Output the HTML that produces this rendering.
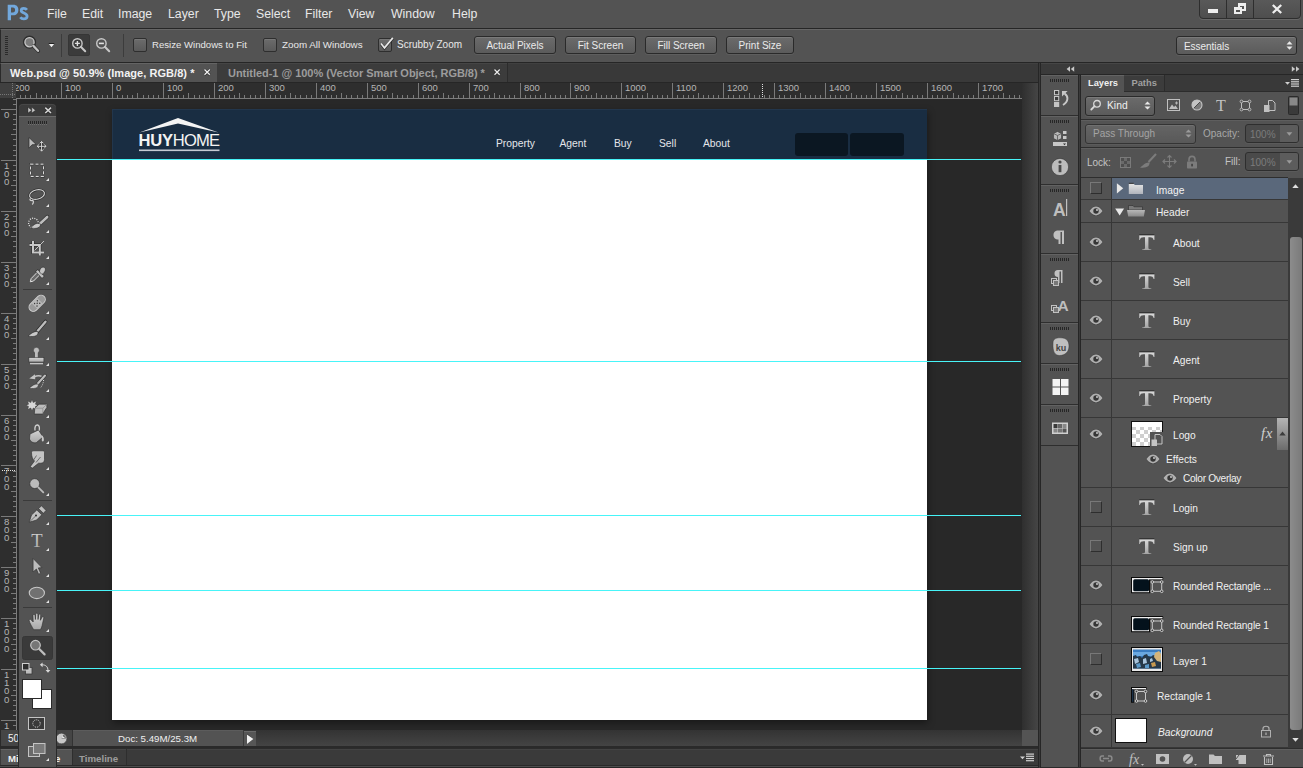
<!DOCTYPE html>
<html><head><meta charset="utf-8">
<style>
*{box-sizing:border-box;margin:0;padding:0}
html,body{width:1303px;height:768px;overflow:hidden;background:#535353;font-family:"Liberation Sans",sans-serif;color:#e6e6e6}
.a{position:absolute}
.t{position:absolute;white-space:nowrap;line-height:1}
svg{position:absolute;overflow:visible}
.navt{top:139px;font-size:10.3px;color:#e4e6ea}
.dd{border:1px solid #2a2a2a;border-radius:3px;background:linear-gradient(#6b6b6b,#5b5b5b);box-shadow:inset 0 1px 0 #7a7a7a,0 1px 0 #5e5e5e}
.fld{width:54px;height:19px;border:1px solid #2e2e2e;border-radius:3px;background:#4a4a4a;box-shadow:0 1px 0 #5a5a5a}
.fb{position:absolute;left:34px;top:0;width:18px;height:17px;background:#5c5c5c;border-radius:0 2px 2px 0}
.cb{width:14px;height:14px;border:1px solid #2e2e2e;border-radius:2px;background:linear-gradient(#6c6c6c,#5a5a5a);box-shadow:inset 0 1px 0 #777}
.btn{top:36px;height:18px;border:1px solid #2a2a2a;border-radius:3px;background:linear-gradient(#6b6b6b,#5b5b5b);box-shadow:inset 0 1px 0 #7a7a7a,0 1px 0 #5e5e5e;text-align:center}
.btn span{position:absolute;left:0;right:0;top:4px;font-size:10px;line-height:1;color:#ebebeb;white-space:nowrap}
</style></head><body>
<!-- MENU BAR -->
<div class="a" style="left:0;top:0;width:1303px;height:28px;background:#535353"></div>
<svg style="left:0;top:0" width="32" height="26" viewBox="0 0 32 26"><path fill-rule="evenodd" d="M7.7 20.2 V4.7 H13.4 C16.8 4.7 18.4 6.8 18.4 9.9 C18.4 13 16.5 15.2 13.2 15.2 H11 V20.2Z M11 7.5 V12.4 H12.9 C14.4 12.4 15.1 11.4 15.1 9.95 C15.1 8.5 14.4 7.5 12.9 7.5Z" fill="#72a8dc"/><path d="M26.9 9.9 C26.1 8.8 25 8.4 23.8 8.4 C22 8.4 21.2 9.3 21.2 10.4 C21.2 13.5 27.1 12.6 27.1 16.2 C27.1 18 25.6 18.9 23.7 18.9 C22.1 18.9 21 18.3 20.3 17.3" fill="none" stroke="#72a8dc" stroke-width="2.8"/></svg>
<div class="t" style="left:47px;top:8px;font-size:12.3px;color:#e8e8e8">File</div>
<div class="t" style="left:82px;top:8px;font-size:12.3px;color:#e8e8e8">Edit</div>
<div class="t" style="left:118px;top:8px;font-size:12.3px;color:#e8e8e8">Image</div>
<div class="t" style="left:168px;top:8px;font-size:12.3px;color:#e8e8e8">Layer</div>
<div class="t" style="left:214px;top:8px;font-size:12.3px;color:#e8e8e8">Type</div>
<div class="t" style="left:256px;top:8px;font-size:12.3px;color:#e8e8e8">Select</div>
<div class="t" style="left:305px;top:8px;font-size:12.3px;color:#e8e8e8">Filter</div>
<div class="t" style="left:348px;top:8px;font-size:12.3px;color:#e8e8e8">View</div>
<div class="t" style="left:391px;top:8px;font-size:12.3px;color:#e8e8e8">Window</div>
<div class="t" style="left:452px;top:8px;font-size:12.3px;color:#e8e8e8">Help</div>
<!-- window controls -->
<div class="a" style="left:1198.5px;top:-3px;width:102.5px;height:22px;border:1px solid #2e2e2e;border-radius:0 0 4px 4px;background:linear-gradient(#5a5a5a,#4e4e4e);box-shadow:0 1px 0 #676767"></div>
<div class="a" style="left:1226px;top:0;width:1px;height:18px;background:#2e2e2e"></div>
<div class="a" style="left:1253px;top:0;width:1px;height:18px;background:#2e2e2e"></div>
<div class="a" style="left:1208px;top:9px;width:10px;height:4px;background:#eee"></div>
<div class="a" style="left:1238px;top:3px;width:8px;height:8px;border:2px solid #eee;border-top-width:3px"></div>
<div class="a" style="left:1234px;top:7px;width:8px;height:7px;border:2px solid #eee;border-top-width:3px;background:#535353"></div>
<svg style="left:1271px;top:4px" width="12" height="10" viewBox="0 0 12 10"><path d="M1.8 1 L10.2 9 M10.2 1 L1.8 9" stroke="#eee" stroke-width="2.3"/></svg>
<div class="a" style="left:0;top:28px;width:1303px;height:1px;background:#262626"></div>

<!-- OPTIONS BAR -->
<div class="a" style="left:0;top:29px;width:1303px;height:33px;background:#535353;border-top:1px solid #666;border-left:1px solid #2a2a2a"></div>
<div class="a" style="left:0;top:62px;width:1303px;height:1px;background:#262626"></div>
<div class="a" style="left:5px;top:36px;width:3px;height:20px;background:repeating-linear-gradient(#2a2a2a 0 1px,transparent 1px 2px)"></div>
<svg style="left:22px;top:35px" width="20" height="20" viewBox="0 0 20 20">
 <circle cx="7.5" cy="7.2" r="5" fill="#7b7b7b" stroke="#2e2e2e" stroke-width="3.2"/>
 <circle cx="7.5" cy="7.2" r="4.6" fill="#7b7b7b" stroke="#c9c9c9" stroke-width="1.3"/>
 <path d="M11.5 11 L16.3 16" stroke="#2e2e2e" stroke-width="3.6" stroke-linecap="round"/>
 <path d="M11.3 10.8 L16 15.8" stroke="#c4c4c4" stroke-width="2.4" stroke-linecap="round"/>
</svg>
<svg style="left:48px;top:43px" width="7" height="5" viewBox="0 0 7 5"><path d="M0.5 0.5 H6.5 L3.5 4.2Z" fill="#f0f0f0"/><path d="M0.5 0.5H6.5" stroke="#222" stroke-width="1"/></svg>
<div class="a" style="left:61px;top:34px;width:1px;height:23px;background:#3c3c3c"></div>
<div class="a" style="left:68px;top:34px;width:22px;height:22px;background:#3b3b3b;border:1px solid #363636;border-radius:2px"></div>
<svg style="left:70px;top:36px" width="18" height="18" viewBox="0 0 18 18">
 <circle cx="7.4" cy="7.4" r="4.7" fill="none" stroke="#c8c8c8" stroke-width="1.4"/>
 <path d="M7.4 4.9V9.9M4.9 7.4H9.9" stroke="#e0e0e0" stroke-width="1.4"/>
 <path d="M10.8 10.8L15.2 15.3" stroke="#c8c8c8" stroke-width="2" stroke-linecap="round"/>
</svg>
<svg style="left:94px;top:36px" width="18" height="18" viewBox="0 0 18 18">
 <circle cx="7.4" cy="7.4" r="4.7" fill="none" stroke="#c8c8c8" stroke-width="1.4"/>
 <path d="M4.9 7.4H9.9" stroke="#e0e0e0" stroke-width="1.6"/>
 <path d="M10.8 10.8L15.2 15.3" stroke="#c8c8c8" stroke-width="2" stroke-linecap="round"/>
</svg>
<div class="a" style="left:123px;top:34px;width:1px;height:23px;background:#3c3c3c"></div>
<div class="a cb" style="left:133px;top:38px"></div>
<div class="t" style="left:152px;top:40px;font-size:9.6px;color:#e8e8e8">Resize Windows to Fit</div>
<div class="a cb" style="left:263px;top:38px"></div>
<div class="t" style="left:282px;top:40px;font-size:9.8px;color:#e8e8e8">Zoom All Windows</div>
<div class="a cb" style="left:378px;top:38px"></div>
<svg style="left:379px;top:35px" width="15" height="15" viewBox="0 0 15 15"><path d="M2 8.9 L5.5 13.4 L13.8 3.4" fill="none" stroke="#262626" stroke-width="2.6" opacity="0.8"/><path d="M2 8.4 L5.5 12.9 L13.8 2.9" fill="none" stroke="#e8e8e8" stroke-width="1.7"/></svg>
<div class="t" style="left:397px;top:40px;font-size:10px;color:#e8e8e8">Scrubby Zoom</div>
<div class="a btn" style="left:474px;width:82px"><span>Actual Pixels</span></div>
<div class="a btn" style="left:565px;width:71px"><span>Fit Screen</span></div>
<div class="a btn" style="left:645px;width:72px"><span>Fill Screen</span></div>
<div class="a btn" style="left:726px;width:68px"><span>Print Size</span></div>
<div class="a btn" style="left:1176px;width:121px;height:19px"><span style="left:7px;right:auto;top:5px;letter-spacing:-0.05px">Essentials</span></div>
<svg style="left:1286px;top:41px" width="7" height="9" viewBox="0 0 7 9"><path d="M0.5 3.5H6.5L3.5 0.3Z M0.5 5.5H6.5L3.5 8.7Z" fill="#eaeaea"/></svg>

<!-- TAB BAR -->
<div class="a" style="left:0;top:63px;width:1038px;height:19px;background:#393939;box-shadow:inset 0 1px 0 #404040"></div>
<div class="a" style="left:0;top:63px;width:217px;height:19px;background:#535353;border-top:1px solid #646464;border-left:1px solid #2a2a2a"></div>
<div class="t" style="left:10px;top:68px;font-size:11px;font-weight:700;color:#f2f2f2;letter-spacing:0.05px">Web.psd @ 50.9% (Image, RGB/8) *</div>
<svg style="left:204px;top:69px" width="7" height="7" viewBox="0 0 7 7"><path d="M0.5 0.5L5.8 5.8M5.8 0.5L0.5 5.8" stroke="#1e1e1e" stroke-width="2.4"/><path d="M0.5 0.5L5.8 5.8M5.8 0.5L0.5 5.8" stroke="#f0f0f0" stroke-width="1.4"/></svg>
<div class="a" style="left:217px;top:63px;width:290px;height:19px;background:#3c3c3c;border-top:1px solid #454545"></div>
<div class="a" style="left:507px;top:63px;width:1px;height:19px;background:#2c2c2c"></div>
<div class="t" style="left:228px;top:68px;font-size:11px;font-weight:700;color:#9c9c9c;letter-spacing:-0.03px">Untitled-1 @ 100% (Vector Smart Object, RGB/8) *</div>
<svg style="left:494px;top:69px" width="7" height="7" viewBox="0 0 7 7"><path d="M0.5 0.5L5.7 5.7M5.7 0.5L0.5 5.7" stroke="#1e1e1e" stroke-width="2.4"/><path d="M0.5 0.5L5.7 5.7M5.7 0.5L0.5 5.7" stroke="#e8e8e8" stroke-width="1.4"/></svg>


<!-- CANVAS -->
<div class="a" style="left:16px;top:98px;width:1006px;height:632px;background:#282828"></div>
<div class="a" style="left:112px;top:109px;width:815px;height:611px;background:#fff;box-shadow:1px 3px 7px rgba(0,0,0,0.4)"></div>
<div class="a" style="left:112px;top:109px;width:815px;height:50px;background:#192d42;box-shadow:inset 1px 1px 0 #22364c"></div>
<svg style="left:130px;top:112px" width="100" height="44" viewBox="130 112 100 44">
 <path d="M139.5 132.6 L178 118 L218.5 132.6 L178 123.6 Z" fill="#f4f4f4"/>
 <rect x="139" y="149.5" width="80.5" height="1.6" fill="#c6cbd3"/>
</svg>
<div class="t" style="left:138.5px;top:133px;font-size:16.6px;color:#f4f4f4"><b style="letter-spacing:-0.25px">HUY</b><span style="letter-spacing:-0.8px">HOME</span></div>
<div class="t navt" style="left:496px">Property</div>
<div class="t navt" style="left:559.5px">Agent</div>
<div class="t navt" style="left:614px">Buy</div>
<div class="t navt" style="left:659px">Sell</div>
<div class="t navt" style="left:703px">About</div>
<div class="a" style="left:795px;top:133px;width:53px;height:23px;background:#0b1722;border-radius:3px"></div>
<div class="a" style="left:850px;top:133px;width:54px;height:23px;background:#0b1722;border-radius:3px"></div>
<!-- guides -->
<div class="a" style="left:57px;top:159px;width:964px;height:1px;background:#48f4f8"></div>
<div class="a" style="left:57px;top:361px;width:964px;height:1px;background:#48f4f8"></div>
<div class="a" style="left:57px;top:515px;width:964px;height:1px;background:#48f4f8"></div>
<div class="a" style="left:57px;top:590px;width:964px;height:1px;background:#48f4f8"></div>
<div class="a" style="left:57px;top:668px;width:964px;height:1px;background:#48f4f8"></div>

<!-- RULERS -->
<svg style="left:0;top:82px" width="1022" height="17" viewBox="0 0 1022 17" shape-rendering="crispEdges">
<rect x="0" y="0" width="1022" height="1" fill="#262626"/>
<rect x="16" y="1" width="1006" height="15" fill="#2e2e2e"/>
<rect x="16" y="16" width="1006" height="1" fill="#7c7c7c"/>
<rect x="20" y="13" width="1" height="3" fill="#7a7a7a"/>
<rect x="25" y="13" width="1" height="3" fill="#7a7a7a"/>
<rect x="30" y="13" width="1" height="3" fill="#7a7a7a"/>
<rect x="36" y="11" width="1" height="5" fill="#7a7a7a"/>
<rect x="41" y="13" width="1" height="3" fill="#7a7a7a"/>
<rect x="46" y="13" width="1" height="3" fill="#7a7a7a"/>
<rect x="51" y="13" width="1" height="3" fill="#7a7a7a"/>
<rect x="56" y="13" width="1" height="3" fill="#7a7a7a"/>
<rect x="61" y="1" width="1" height="15" fill="#7a7a7a"/>
<rect x="66" y="13" width="1" height="3" fill="#7a7a7a"/>
<rect x="71" y="13" width="1" height="3" fill="#7a7a7a"/>
<rect x="76" y="13" width="1" height="3" fill="#7a7a7a"/>
<rect x="81" y="13" width="1" height="3" fill="#7a7a7a"/>
<rect x="87" y="11" width="1" height="5" fill="#7a7a7a"/>
<rect x="92" y="13" width="1" height="3" fill="#7a7a7a"/>
<rect x="97" y="13" width="1" height="3" fill="#7a7a7a"/>
<rect x="102" y="13" width="1" height="3" fill="#7a7a7a"/>
<rect x="107" y="13" width="1" height="3" fill="#7a7a7a"/>
<rect x="112" y="1" width="1" height="15" fill="#7a7a7a"/>
<rect x="117" y="13" width="1" height="3" fill="#7a7a7a"/>
<rect x="122" y="13" width="1" height="3" fill="#7a7a7a"/>
<rect x="127" y="13" width="1" height="3" fill="#7a7a7a"/>
<rect x="132" y="13" width="1" height="3" fill="#7a7a7a"/>
<rect x="137" y="11" width="1" height="5" fill="#7a7a7a"/>
<rect x="143" y="13" width="1" height="3" fill="#7a7a7a"/>
<rect x="148" y="13" width="1" height="3" fill="#7a7a7a"/>
<rect x="153" y="13" width="1" height="3" fill="#7a7a7a"/>
<rect x="158" y="13" width="1" height="3" fill="#7a7a7a"/>
<rect x="163" y="1" width="1" height="15" fill="#7a7a7a"/>
<rect x="168" y="13" width="1" height="3" fill="#7a7a7a"/>
<rect x="173" y="13" width="1" height="3" fill="#7a7a7a"/>
<rect x="178" y="13" width="1" height="3" fill="#7a7a7a"/>
<rect x="183" y="13" width="1" height="3" fill="#7a7a7a"/>
<rect x="188" y="11" width="1" height="5" fill="#7a7a7a"/>
<rect x="194" y="13" width="1" height="3" fill="#7a7a7a"/>
<rect x="199" y="13" width="1" height="3" fill="#7a7a7a"/>
<rect x="204" y="13" width="1" height="3" fill="#7a7a7a"/>
<rect x="209" y="13" width="1" height="3" fill="#7a7a7a"/>
<rect x="214" y="1" width="1" height="15" fill="#7a7a7a"/>
<rect x="219" y="13" width="1" height="3" fill="#7a7a7a"/>
<rect x="224" y="13" width="1" height="3" fill="#7a7a7a"/>
<rect x="229" y="13" width="1" height="3" fill="#7a7a7a"/>
<rect x="234" y="13" width="1" height="3" fill="#7a7a7a"/>
<rect x="239" y="11" width="1" height="5" fill="#7a7a7a"/>
<rect x="244" y="13" width="1" height="3" fill="#7a7a7a"/>
<rect x="250" y="13" width="1" height="3" fill="#7a7a7a"/>
<rect x="255" y="13" width="1" height="3" fill="#7a7a7a"/>
<rect x="260" y="13" width="1" height="3" fill="#7a7a7a"/>
<rect x="265" y="1" width="1" height="15" fill="#7a7a7a"/>
<rect x="270" y="13" width="1" height="3" fill="#7a7a7a"/>
<rect x="275" y="13" width="1" height="3" fill="#7a7a7a"/>
<rect x="280" y="13" width="1" height="3" fill="#7a7a7a"/>
<rect x="285" y="13" width="1" height="3" fill="#7a7a7a"/>
<rect x="290" y="11" width="1" height="5" fill="#7a7a7a"/>
<rect x="295" y="13" width="1" height="3" fill="#7a7a7a"/>
<rect x="300" y="13" width="1" height="3" fill="#7a7a7a"/>
<rect x="306" y="13" width="1" height="3" fill="#7a7a7a"/>
<rect x="311" y="13" width="1" height="3" fill="#7a7a7a"/>
<rect x="316" y="1" width="1" height="15" fill="#7a7a7a"/>
<rect x="321" y="13" width="1" height="3" fill="#7a7a7a"/>
<rect x="326" y="13" width="1" height="3" fill="#7a7a7a"/>
<rect x="331" y="13" width="1" height="3" fill="#7a7a7a"/>
<rect x="336" y="13" width="1" height="3" fill="#7a7a7a"/>
<rect x="341" y="11" width="1" height="5" fill="#7a7a7a"/>
<rect x="346" y="13" width="1" height="3" fill="#7a7a7a"/>
<rect x="351" y="13" width="1" height="3" fill="#7a7a7a"/>
<rect x="357" y="13" width="1" height="3" fill="#7a7a7a"/>
<rect x="362" y="13" width="1" height="3" fill="#7a7a7a"/>
<rect x="367" y="1" width="1" height="15" fill="#7a7a7a"/>
<rect x="372" y="13" width="1" height="3" fill="#7a7a7a"/>
<rect x="377" y="13" width="1" height="3" fill="#7a7a7a"/>
<rect x="382" y="13" width="1" height="3" fill="#7a7a7a"/>
<rect x="387" y="13" width="1" height="3" fill="#7a7a7a"/>
<rect x="392" y="11" width="1" height="5" fill="#7a7a7a"/>
<rect x="397" y="13" width="1" height="3" fill="#7a7a7a"/>
<rect x="402" y="13" width="1" height="3" fill="#7a7a7a"/>
<rect x="407" y="13" width="1" height="3" fill="#7a7a7a"/>
<rect x="413" y="13" width="1" height="3" fill="#7a7a7a"/>
<rect x="418" y="1" width="1" height="15" fill="#7a7a7a"/>
<rect x="423" y="13" width="1" height="3" fill="#7a7a7a"/>
<rect x="428" y="13" width="1" height="3" fill="#7a7a7a"/>
<rect x="433" y="13" width="1" height="3" fill="#7a7a7a"/>
<rect x="438" y="13" width="1" height="3" fill="#7a7a7a"/>
<rect x="443" y="11" width="1" height="5" fill="#7a7a7a"/>
<rect x="448" y="13" width="1" height="3" fill="#7a7a7a"/>
<rect x="453" y="13" width="1" height="3" fill="#7a7a7a"/>
<rect x="458" y="13" width="1" height="3" fill="#7a7a7a"/>
<rect x="463" y="13" width="1" height="3" fill="#7a7a7a"/>
<rect x="469" y="1" width="1" height="15" fill="#7a7a7a"/>
<rect x="474" y="13" width="1" height="3" fill="#7a7a7a"/>
<rect x="479" y="13" width="1" height="3" fill="#7a7a7a"/>
<rect x="484" y="13" width="1" height="3" fill="#7a7a7a"/>
<rect x="489" y="13" width="1" height="3" fill="#7a7a7a"/>
<rect x="494" y="11" width="1" height="5" fill="#7a7a7a"/>
<rect x="499" y="13" width="1" height="3" fill="#7a7a7a"/>
<rect x="504" y="13" width="1" height="3" fill="#7a7a7a"/>
<rect x="509" y="13" width="1" height="3" fill="#7a7a7a"/>
<rect x="514" y="13" width="1" height="3" fill="#7a7a7a"/>
<rect x="520" y="1" width="1" height="15" fill="#7a7a7a"/>
<rect x="525" y="13" width="1" height="3" fill="#7a7a7a"/>
<rect x="530" y="13" width="1" height="3" fill="#7a7a7a"/>
<rect x="535" y="13" width="1" height="3" fill="#7a7a7a"/>
<rect x="540" y="13" width="1" height="3" fill="#7a7a7a"/>
<rect x="545" y="11" width="1" height="5" fill="#7a7a7a"/>
<rect x="550" y="13" width="1" height="3" fill="#7a7a7a"/>
<rect x="555" y="13" width="1" height="3" fill="#7a7a7a"/>
<rect x="560" y="13" width="1" height="3" fill="#7a7a7a"/>
<rect x="565" y="13" width="1" height="3" fill="#7a7a7a"/>
<rect x="570" y="1" width="1" height="15" fill="#7a7a7a"/>
<rect x="576" y="13" width="1" height="3" fill="#7a7a7a"/>
<rect x="581" y="13" width="1" height="3" fill="#7a7a7a"/>
<rect x="586" y="13" width="1" height="3" fill="#7a7a7a"/>
<rect x="591" y="13" width="1" height="3" fill="#7a7a7a"/>
<rect x="596" y="11" width="1" height="5" fill="#7a7a7a"/>
<rect x="601" y="13" width="1" height="3" fill="#7a7a7a"/>
<rect x="606" y="13" width="1" height="3" fill="#7a7a7a"/>
<rect x="611" y="13" width="1" height="3" fill="#7a7a7a"/>
<rect x="616" y="13" width="1" height="3" fill="#7a7a7a"/>
<rect x="621" y="1" width="1" height="15" fill="#7a7a7a"/>
<rect x="626" y="13" width="1" height="3" fill="#7a7a7a"/>
<rect x="632" y="13" width="1" height="3" fill="#7a7a7a"/>
<rect x="637" y="13" width="1" height="3" fill="#7a7a7a"/>
<rect x="642" y="13" width="1" height="3" fill="#7a7a7a"/>
<rect x="647" y="11" width="1" height="5" fill="#7a7a7a"/>
<rect x="652" y="13" width="1" height="3" fill="#7a7a7a"/>
<rect x="657" y="13" width="1" height="3" fill="#7a7a7a"/>
<rect x="662" y="13" width="1" height="3" fill="#7a7a7a"/>
<rect x="667" y="13" width="1" height="3" fill="#7a7a7a"/>
<rect x="672" y="1" width="1" height="15" fill="#7a7a7a"/>
<rect x="677" y="13" width="1" height="3" fill="#7a7a7a"/>
<rect x="683" y="13" width="1" height="3" fill="#7a7a7a"/>
<rect x="688" y="13" width="1" height="3" fill="#7a7a7a"/>
<rect x="693" y="13" width="1" height="3" fill="#7a7a7a"/>
<rect x="698" y="11" width="1" height="5" fill="#7a7a7a"/>
<rect x="703" y="13" width="1" height="3" fill="#7a7a7a"/>
<rect x="708" y="13" width="1" height="3" fill="#7a7a7a"/>
<rect x="713" y="13" width="1" height="3" fill="#7a7a7a"/>
<rect x="718" y="13" width="1" height="3" fill="#7a7a7a"/>
<rect x="723" y="1" width="1" height="15" fill="#7a7a7a"/>
<rect x="728" y="13" width="1" height="3" fill="#7a7a7a"/>
<rect x="733" y="13" width="1" height="3" fill="#7a7a7a"/>
<rect x="739" y="13" width="1" height="3" fill="#7a7a7a"/>
<rect x="744" y="13" width="1" height="3" fill="#7a7a7a"/>
<rect x="749" y="11" width="1" height="5" fill="#7a7a7a"/>
<rect x="754" y="13" width="1" height="3" fill="#7a7a7a"/>
<rect x="759" y="13" width="1" height="3" fill="#7a7a7a"/>
<rect x="764" y="13" width="1" height="3" fill="#7a7a7a"/>
<rect x="769" y="13" width="1" height="3" fill="#7a7a7a"/>
<rect x="774" y="1" width="1" height="15" fill="#7a7a7a"/>
<rect x="779" y="13" width="1" height="3" fill="#7a7a7a"/>
<rect x="784" y="13" width="1" height="3" fill="#7a7a7a"/>
<rect x="790" y="13" width="1" height="3" fill="#7a7a7a"/>
<rect x="795" y="13" width="1" height="3" fill="#7a7a7a"/>
<rect x="800" y="11" width="1" height="5" fill="#7a7a7a"/>
<rect x="805" y="13" width="1" height="3" fill="#7a7a7a"/>
<rect x="810" y="13" width="1" height="3" fill="#7a7a7a"/>
<rect x="815" y="13" width="1" height="3" fill="#7a7a7a"/>
<rect x="820" y="13" width="1" height="3" fill="#7a7a7a"/>
<rect x="825" y="1" width="1" height="15" fill="#7a7a7a"/>
<rect x="830" y="13" width="1" height="3" fill="#7a7a7a"/>
<rect x="835" y="13" width="1" height="3" fill="#7a7a7a"/>
<rect x="840" y="13" width="1" height="3" fill="#7a7a7a"/>
<rect x="846" y="13" width="1" height="3" fill="#7a7a7a"/>
<rect x="851" y="11" width="1" height="5" fill="#7a7a7a"/>
<rect x="856" y="13" width="1" height="3" fill="#7a7a7a"/>
<rect x="861" y="13" width="1" height="3" fill="#7a7a7a"/>
<rect x="866" y="13" width="1" height="3" fill="#7a7a7a"/>
<rect x="871" y="13" width="1" height="3" fill="#7a7a7a"/>
<rect x="876" y="1" width="1" height="15" fill="#7a7a7a"/>
<rect x="881" y="13" width="1" height="3" fill="#7a7a7a"/>
<rect x="886" y="13" width="1" height="3" fill="#7a7a7a"/>
<rect x="891" y="13" width="1" height="3" fill="#7a7a7a"/>
<rect x="896" y="13" width="1" height="3" fill="#7a7a7a"/>
<rect x="902" y="11" width="1" height="5" fill="#7a7a7a"/>
<rect x="907" y="13" width="1" height="3" fill="#7a7a7a"/>
<rect x="912" y="13" width="1" height="3" fill="#7a7a7a"/>
<rect x="917" y="13" width="1" height="3" fill="#7a7a7a"/>
<rect x="922" y="13" width="1" height="3" fill="#7a7a7a"/>
<rect x="927" y="1" width="1" height="15" fill="#7a7a7a"/>
<rect x="932" y="13" width="1" height="3" fill="#7a7a7a"/>
<rect x="937" y="13" width="1" height="3" fill="#7a7a7a"/>
<rect x="942" y="13" width="1" height="3" fill="#7a7a7a"/>
<rect x="947" y="13" width="1" height="3" fill="#7a7a7a"/>
<rect x="953" y="11" width="1" height="5" fill="#7a7a7a"/>
<rect x="958" y="13" width="1" height="3" fill="#7a7a7a"/>
<rect x="963" y="13" width="1" height="3" fill="#7a7a7a"/>
<rect x="968" y="13" width="1" height="3" fill="#7a7a7a"/>
<rect x="973" y="13" width="1" height="3" fill="#7a7a7a"/>
<rect x="978" y="1" width="1" height="15" fill="#7a7a7a"/>
<rect x="983" y="13" width="1" height="3" fill="#7a7a7a"/>
<rect x="988" y="13" width="1" height="3" fill="#7a7a7a"/>
<rect x="993" y="13" width="1" height="3" fill="#7a7a7a"/>
<rect x="998" y="13" width="1" height="3" fill="#7a7a7a"/>
<rect x="1003" y="11" width="1" height="5" fill="#7a7a7a"/>
<rect x="1009" y="13" width="1" height="3" fill="#7a7a7a"/>
<rect x="1014" y="13" width="1" height="3" fill="#7a7a7a"/>
<rect x="1019" y="13" width="1" height="3" fill="#7a7a7a"/>
<text x="14" y="9" font-size="9.5" fill="#b4b4b4" font-family="Liberation Sans" shape-rendering="auto">200</text>
<text x="65" y="9" font-size="9.5" fill="#b4b4b4" font-family="Liberation Sans" shape-rendering="auto">100</text>
<text x="116" y="9" font-size="9.5" fill="#b4b4b4" font-family="Liberation Sans" shape-rendering="auto">0</text>
<text x="167" y="9" font-size="9.5" fill="#b4b4b4" font-family="Liberation Sans" shape-rendering="auto">100</text>
<text x="218" y="9" font-size="9.5" fill="#b4b4b4" font-family="Liberation Sans" shape-rendering="auto">200</text>
<text x="269" y="9" font-size="9.5" fill="#b4b4b4" font-family="Liberation Sans" shape-rendering="auto">300</text>
<text x="320" y="9" font-size="9.5" fill="#b4b4b4" font-family="Liberation Sans" shape-rendering="auto">400</text>
<text x="371" y="9" font-size="9.5" fill="#b4b4b4" font-family="Liberation Sans" shape-rendering="auto">500</text>
<text x="422" y="9" font-size="9.5" fill="#b4b4b4" font-family="Liberation Sans" shape-rendering="auto">600</text>
<text x="473" y="9" font-size="9.5" fill="#b4b4b4" font-family="Liberation Sans" shape-rendering="auto">700</text>
<text x="524" y="9" font-size="9.5" fill="#b4b4b4" font-family="Liberation Sans" shape-rendering="auto">800</text>
<text x="574" y="9" font-size="9.5" fill="#b4b4b4" font-family="Liberation Sans" shape-rendering="auto">900</text>
<text x="625" y="9" font-size="9.5" fill="#b4b4b4" font-family="Liberation Sans" shape-rendering="auto">1000</text>
<text x="676" y="9" font-size="9.5" fill="#b4b4b4" font-family="Liberation Sans" shape-rendering="auto">1100</text>
<text x="727" y="9" font-size="9.5" fill="#b4b4b4" font-family="Liberation Sans" shape-rendering="auto">1200</text>
<text x="778" y="9" font-size="9.5" fill="#b4b4b4" font-family="Liberation Sans" shape-rendering="auto">1300</text>
<text x="829" y="9" font-size="9.5" fill="#b4b4b4" font-family="Liberation Sans" shape-rendering="auto">1400</text>
<text x="880" y="9" font-size="9.5" fill="#b4b4b4" font-family="Liberation Sans" shape-rendering="auto">1500</text>
<text x="931" y="9" font-size="9.5" fill="#b4b4b4" font-family="Liberation Sans" shape-rendering="auto">1600</text>
<text x="982" y="9" font-size="9.5" fill="#b4b4b4" font-family="Liberation Sans" shape-rendering="auto">1700</text>
<rect x="762" y="2" width="1" height="1" fill="#e0e0e0"/><rect x="762" y="4" width="1" height="1" fill="#e0e0e0"/><rect x="762" y="6" width="1" height="1" fill="#e0e0e0"/><rect x="762" y="8" width="1" height="1" fill="#e0e0e0"/><rect x="762" y="10" width="1" height="1" fill="#e0e0e0"/><rect x="762" y="12" width="1" height="1" fill="#e0e0e0"/><rect x="762" y="14" width="1" height="1" fill="#e0e0e0"/>
</svg>
<div class="a" style="left:0;top:83px;width:16px;height:15px;background:#404040"></div>
<div class="a" style="left:12px;top:83px;width:1px;height:15px;background:repeating-linear-gradient(#777 0 1px,transparent 1px 2px)"></div>
<div class="a" style="left:0;top:94px;width:16px;height:1px;background:repeating-linear-gradient(90deg,#777 0 1px,transparent 1px 2px)"></div>
<svg style="left:0;top:98px" width="17" height="632" viewBox="0 0 17 632" shape-rendering="crispEdges">
<rect x="0" y="0" width="16" height="632" fill="#2e2e2e"/>
<rect x="16" y="0" width="1" height="632" fill="#7c7c7c"/>
<rect x="13" y="1" width="3" height="1" fill="#7a7a7a"/>
<rect x="13" y="6" width="3" height="1" fill="#7a7a7a"/>
<rect x="1" y="11" width="15" height="1" fill="#7a7a7a"/>
<text x="4" y="19.9" font-size="9.6" fill="#b4b4b4" font-family="Liberation Sans" shape-rendering="auto">0</text>
<rect x="13" y="16" width="3" height="1" fill="#7a7a7a"/>
<rect x="13" y="21" width="3" height="1" fill="#7a7a7a"/>
<rect x="13" y="26" width="3" height="1" fill="#7a7a7a"/>
<rect x="13" y="31" width="3" height="1" fill="#7a7a7a"/>
<rect x="11" y="36" width="5" height="1" fill="#7a7a7a"/>
<rect x="13" y="41" width="3" height="1" fill="#7a7a7a"/>
<rect x="13" y="47" width="3" height="1" fill="#7a7a7a"/>
<rect x="13" y="52" width="3" height="1" fill="#7a7a7a"/>
<rect x="13" y="57" width="3" height="1" fill="#7a7a7a"/>
<rect x="1" y="62" width="15" height="1" fill="#7a7a7a"/>
<text x="4" y="70.9" font-size="9.6" fill="#b4b4b4" font-family="Liberation Sans" shape-rendering="auto">1</text>
<text x="4" y="79.1" font-size="9.6" fill="#b4b4b4" font-family="Liberation Sans" shape-rendering="auto">0</text>
<text x="4" y="87.3" font-size="9.6" fill="#b4b4b4" font-family="Liberation Sans" shape-rendering="auto">0</text>
<rect x="13" y="67" width="3" height="1" fill="#7a7a7a"/>
<rect x="13" y="72" width="3" height="1" fill="#7a7a7a"/>
<rect x="13" y="77" width="3" height="1" fill="#7a7a7a"/>
<rect x="13" y="82" width="3" height="1" fill="#7a7a7a"/>
<rect x="11" y="87" width="5" height="1" fill="#7a7a7a"/>
<rect x="13" y="92" width="3" height="1" fill="#7a7a7a"/>
<rect x="13" y="97" width="3" height="1" fill="#7a7a7a"/>
<rect x="13" y="103" width="3" height="1" fill="#7a7a7a"/>
<rect x="13" y="108" width="3" height="1" fill="#7a7a7a"/>
<rect x="1" y="113" width="15" height="1" fill="#7a7a7a"/>
<text x="4" y="121.9" font-size="9.6" fill="#b4b4b4" font-family="Liberation Sans" shape-rendering="auto">2</text>
<text x="4" y="130.1" font-size="9.6" fill="#b4b4b4" font-family="Liberation Sans" shape-rendering="auto">0</text>
<text x="4" y="138.3" font-size="9.6" fill="#b4b4b4" font-family="Liberation Sans" shape-rendering="auto">0</text>
<rect x="13" y="118" width="3" height="1" fill="#7a7a7a"/>
<rect x="13" y="123" width="3" height="1" fill="#7a7a7a"/>
<rect x="13" y="128" width="3" height="1" fill="#7a7a7a"/>
<rect x="13" y="133" width="3" height="1" fill="#7a7a7a"/>
<rect x="11" y="138" width="5" height="1" fill="#7a7a7a"/>
<rect x="13" y="143" width="3" height="1" fill="#7a7a7a"/>
<rect x="13" y="148" width="3" height="1" fill="#7a7a7a"/>
<rect x="13" y="154" width="3" height="1" fill="#7a7a7a"/>
<rect x="13" y="159" width="3" height="1" fill="#7a7a7a"/>
<rect x="1" y="164" width="15" height="1" fill="#7a7a7a"/>
<text x="4" y="172.9" font-size="9.6" fill="#b4b4b4" font-family="Liberation Sans" shape-rendering="auto">3</text>
<text x="4" y="181.1" font-size="9.6" fill="#b4b4b4" font-family="Liberation Sans" shape-rendering="auto">0</text>
<text x="4" y="189.3" font-size="9.6" fill="#b4b4b4" font-family="Liberation Sans" shape-rendering="auto">0</text>
<rect x="13" y="169" width="3" height="1" fill="#7a7a7a"/>
<rect x="13" y="174" width="3" height="1" fill="#7a7a7a"/>
<rect x="13" y="179" width="3" height="1" fill="#7a7a7a"/>
<rect x="13" y="184" width="3" height="1" fill="#7a7a7a"/>
<rect x="11" y="189" width="5" height="1" fill="#7a7a7a"/>
<rect x="13" y="194" width="3" height="1" fill="#7a7a7a"/>
<rect x="13" y="199" width="3" height="1" fill="#7a7a7a"/>
<rect x="13" y="204" width="3" height="1" fill="#7a7a7a"/>
<rect x="13" y="210" width="3" height="1" fill="#7a7a7a"/>
<rect x="1" y="215" width="15" height="1" fill="#7a7a7a"/>
<text x="4" y="223.9" font-size="9.6" fill="#b4b4b4" font-family="Liberation Sans" shape-rendering="auto">4</text>
<text x="4" y="232.1" font-size="9.6" fill="#b4b4b4" font-family="Liberation Sans" shape-rendering="auto">0</text>
<text x="4" y="240.3" font-size="9.6" fill="#b4b4b4" font-family="Liberation Sans" shape-rendering="auto">0</text>
<rect x="13" y="220" width="3" height="1" fill="#7a7a7a"/>
<rect x="13" y="225" width="3" height="1" fill="#7a7a7a"/>
<rect x="13" y="230" width="3" height="1" fill="#7a7a7a"/>
<rect x="13" y="235" width="3" height="1" fill="#7a7a7a"/>
<rect x="11" y="240" width="5" height="1" fill="#7a7a7a"/>
<rect x="13" y="245" width="3" height="1" fill="#7a7a7a"/>
<rect x="13" y="250" width="3" height="1" fill="#7a7a7a"/>
<rect x="13" y="255" width="3" height="1" fill="#7a7a7a"/>
<rect x="13" y="261" width="3" height="1" fill="#7a7a7a"/>
<rect x="1" y="266" width="15" height="1" fill="#7a7a7a"/>
<text x="4" y="274.9" font-size="9.6" fill="#b4b4b4" font-family="Liberation Sans" shape-rendering="auto">5</text>
<text x="4" y="283.1" font-size="9.6" fill="#b4b4b4" font-family="Liberation Sans" shape-rendering="auto">0</text>
<text x="4" y="291.3" font-size="9.6" fill="#b4b4b4" font-family="Liberation Sans" shape-rendering="auto">0</text>
<rect x="13" y="271" width="3" height="1" fill="#7a7a7a"/>
<rect x="13" y="276" width="3" height="1" fill="#7a7a7a"/>
<rect x="13" y="281" width="3" height="1" fill="#7a7a7a"/>
<rect x="13" y="286" width="3" height="1" fill="#7a7a7a"/>
<rect x="11" y="291" width="5" height="1" fill="#7a7a7a"/>
<rect x="13" y="296" width="3" height="1" fill="#7a7a7a"/>
<rect x="13" y="301" width="3" height="1" fill="#7a7a7a"/>
<rect x="13" y="306" width="3" height="1" fill="#7a7a7a"/>
<rect x="13" y="311" width="3" height="1" fill="#7a7a7a"/>
<rect x="1" y="317" width="15" height="1" fill="#7a7a7a"/>
<text x="4" y="325.9" font-size="9.6" fill="#b4b4b4" font-family="Liberation Sans" shape-rendering="auto">6</text>
<text x="4" y="334.1" font-size="9.6" fill="#b4b4b4" font-family="Liberation Sans" shape-rendering="auto">0</text>
<text x="4" y="342.3" font-size="9.6" fill="#b4b4b4" font-family="Liberation Sans" shape-rendering="auto">0</text>
<rect x="13" y="322" width="3" height="1" fill="#7a7a7a"/>
<rect x="13" y="327" width="3" height="1" fill="#7a7a7a"/>
<rect x="13" y="332" width="3" height="1" fill="#7a7a7a"/>
<rect x="13" y="337" width="3" height="1" fill="#7a7a7a"/>
<rect x="11" y="342" width="5" height="1" fill="#7a7a7a"/>
<rect x="13" y="347" width="3" height="1" fill="#7a7a7a"/>
<rect x="13" y="352" width="3" height="1" fill="#7a7a7a"/>
<rect x="13" y="357" width="3" height="1" fill="#7a7a7a"/>
<rect x="13" y="362" width="3" height="1" fill="#7a7a7a"/>
<rect x="1" y="367" width="15" height="1" fill="#7a7a7a"/>
<text x="4" y="375.9" font-size="9.6" fill="#b4b4b4" font-family="Liberation Sans" shape-rendering="auto">7</text>
<text x="4" y="384.1" font-size="9.6" fill="#b4b4b4" font-family="Liberation Sans" shape-rendering="auto">0</text>
<text x="4" y="392.3" font-size="9.6" fill="#b4b4b4" font-family="Liberation Sans" shape-rendering="auto">0</text>
<rect x="13" y="373" width="3" height="1" fill="#7a7a7a"/>
<rect x="13" y="378" width="3" height="1" fill="#7a7a7a"/>
<rect x="13" y="383" width="3" height="1" fill="#7a7a7a"/>
<rect x="13" y="388" width="3" height="1" fill="#7a7a7a"/>
<rect x="11" y="393" width="5" height="1" fill="#7a7a7a"/>
<rect x="13" y="398" width="3" height="1" fill="#7a7a7a"/>
<rect x="13" y="403" width="3" height="1" fill="#7a7a7a"/>
<rect x="13" y="408" width="3" height="1" fill="#7a7a7a"/>
<rect x="13" y="413" width="3" height="1" fill="#7a7a7a"/>
<rect x="1" y="418" width="15" height="1" fill="#7a7a7a"/>
<text x="4" y="426.9" font-size="9.6" fill="#b4b4b4" font-family="Liberation Sans" shape-rendering="auto">8</text>
<text x="4" y="435.1" font-size="9.6" fill="#b4b4b4" font-family="Liberation Sans" shape-rendering="auto">0</text>
<text x="4" y="443.3" font-size="9.6" fill="#b4b4b4" font-family="Liberation Sans" shape-rendering="auto">0</text>
<rect x="13" y="424" width="3" height="1" fill="#7a7a7a"/>
<rect x="13" y="429" width="3" height="1" fill="#7a7a7a"/>
<rect x="13" y="434" width="3" height="1" fill="#7a7a7a"/>
<rect x="13" y="439" width="3" height="1" fill="#7a7a7a"/>
<rect x="11" y="444" width="5" height="1" fill="#7a7a7a"/>
<rect x="13" y="449" width="3" height="1" fill="#7a7a7a"/>
<rect x="13" y="454" width="3" height="1" fill="#7a7a7a"/>
<rect x="13" y="459" width="3" height="1" fill="#7a7a7a"/>
<rect x="13" y="464" width="3" height="1" fill="#7a7a7a"/>
<rect x="1" y="469" width="15" height="1" fill="#7a7a7a"/>
<text x="4" y="477.9" font-size="9.6" fill="#b4b4b4" font-family="Liberation Sans" shape-rendering="auto">9</text>
<text x="4" y="486.1" font-size="9.6" fill="#b4b4b4" font-family="Liberation Sans" shape-rendering="auto">0</text>
<text x="4" y="494.3" font-size="9.6" fill="#b4b4b4" font-family="Liberation Sans" shape-rendering="auto">0</text>
<rect x="13" y="474" width="3" height="1" fill="#7a7a7a"/>
<rect x="13" y="480" width="3" height="1" fill="#7a7a7a"/>
<rect x="13" y="485" width="3" height="1" fill="#7a7a7a"/>
<rect x="13" y="490" width="3" height="1" fill="#7a7a7a"/>
<rect x="11" y="495" width="5" height="1" fill="#7a7a7a"/>
<rect x="13" y="500" width="3" height="1" fill="#7a7a7a"/>
<rect x="13" y="505" width="3" height="1" fill="#7a7a7a"/>
<rect x="13" y="510" width="3" height="1" fill="#7a7a7a"/>
<rect x="13" y="515" width="3" height="1" fill="#7a7a7a"/>
<rect x="1" y="520" width="15" height="1" fill="#7a7a7a"/>
<text x="4" y="528.9" font-size="9.6" fill="#b4b4b4" font-family="Liberation Sans" shape-rendering="auto">1</text>
<text x="4" y="537.1" font-size="9.6" fill="#b4b4b4" font-family="Liberation Sans" shape-rendering="auto">0</text>
<text x="4" y="545.3" font-size="9.6" fill="#b4b4b4" font-family="Liberation Sans" shape-rendering="auto">0</text>
<text x="4" y="553.5" font-size="9.6" fill="#b4b4b4" font-family="Liberation Sans" shape-rendering="auto">0</text>
<rect x="13" y="525" width="3" height="1" fill="#7a7a7a"/>
<rect x="13" y="530" width="3" height="1" fill="#7a7a7a"/>
<rect x="13" y="536" width="3" height="1" fill="#7a7a7a"/>
<rect x="13" y="541" width="3" height="1" fill="#7a7a7a"/>
<rect x="11" y="546" width="5" height="1" fill="#7a7a7a"/>
<rect x="13" y="551" width="3" height="1" fill="#7a7a7a"/>
<rect x="13" y="556" width="3" height="1" fill="#7a7a7a"/>
<rect x="13" y="561" width="3" height="1" fill="#7a7a7a"/>
<rect x="13" y="566" width="3" height="1" fill="#7a7a7a"/>
<rect x="1" y="571" width="15" height="1" fill="#7a7a7a"/>
<text x="4" y="579.9" font-size="9.6" fill="#b4b4b4" font-family="Liberation Sans" shape-rendering="auto">1</text>
<text x="4" y="588.1" font-size="9.6" fill="#b4b4b4" font-family="Liberation Sans" shape-rendering="auto">1</text>
<text x="4" y="596.3" font-size="9.6" fill="#b4b4b4" font-family="Liberation Sans" shape-rendering="auto">0</text>
<text x="4" y="604.5" font-size="9.6" fill="#b4b4b4" font-family="Liberation Sans" shape-rendering="auto">0</text>
<rect x="13" y="576" width="3" height="1" fill="#7a7a7a"/>
<rect x="13" y="581" width="3" height="1" fill="#7a7a7a"/>
<rect x="13" y="587" width="3" height="1" fill="#7a7a7a"/>
<rect x="13" y="592" width="3" height="1" fill="#7a7a7a"/>
<rect x="11" y="597" width="5" height="1" fill="#7a7a7a"/>
<rect x="13" y="602" width="3" height="1" fill="#7a7a7a"/>
<rect x="13" y="607" width="3" height="1" fill="#7a7a7a"/>
<rect x="13" y="612" width="3" height="1" fill="#7a7a7a"/>
<rect x="13" y="617" width="3" height="1" fill="#7a7a7a"/>
<rect x="1" y="622" width="15" height="1" fill="#7a7a7a"/>
<text x="4" y="630.9" font-size="9.6" fill="#b4b4b4" font-family="Liberation Sans" shape-rendering="auto">1</text>
<text x="4" y="639.1" font-size="9.6" fill="#b4b4b4" font-family="Liberation Sans" shape-rendering="auto">2</text>
<text x="4" y="647.3" font-size="9.6" fill="#b4b4b4" font-family="Liberation Sans" shape-rendering="auto">0</text>
<text x="4" y="655.5" font-size="9.6" fill="#b4b4b4" font-family="Liberation Sans" shape-rendering="auto">0</text>
<rect x="13" y="627" width="3" height="1" fill="#7a7a7a"/>
<rect x="2" y="372" width="1" height="1" fill="#e0e0e0"/><rect x="4" y="372" width="1" height="1" fill="#e0e0e0"/><rect x="6" y="372" width="1" height="1" fill="#e0e0e0"/><rect x="8" y="372" width="1" height="1" fill="#e0e0e0"/><rect x="10" y="372" width="1" height="1" fill="#e0e0e0"/><rect x="12" y="372" width="1" height="1" fill="#e0e0e0"/><rect x="14" y="372" width="1" height="1" fill="#e0e0e0"/>
</svg>
<!-- V SCROLLBAR -->
<div class="a" style="left:1022px;top:83px;width:16px;height:647px;background:linear-gradient(90deg,#2f2f2f,#454545)"></div>
<div class="a" style="left:1022px;top:82px;width:16px;height:1px;background:#262626"></div>
<!-- STATUS / H SCROLL -->
<div class="a" style="left:0;top:730px;width:1022px;height:16px;background:linear-gradient(#333,#444)"></div>
<div class="a" style="left:1022px;top:730px;width:16px;height:16px;background:#545454"></div>
<div class="a" style="left:0;top:730px;width:73px;height:16px;background:#454545;border-left:1px solid #2a2a2a"></div>
<div class="t" style="left:8px;top:734px;font-size:10px;color:#f0f0f0">50.9%</div>
<svg style="left:55px;top:732px" width="13" height="13" viewBox="0 0 13 13"><circle cx="6.5" cy="6.5" r="5.3" fill="#c8c8c8" stroke="#3a3a3a" stroke-width="0.5"/><path d="M6.5 6.5 H11 A4.5 4.5 0 0 0 8.5 2.5Z" fill="#666"/><path d="M7.2 3.8 L10 6 L7.2 6Z" fill="#f0f0f0"/></svg>
<div class="a" style="left:72px;top:730px;width:1px;height:16px;background:#333"></div>
<div class="a" style="left:73px;top:730px;width:171px;height:16px;background:#535353;box-shadow:inset 0 1px 0 #5c5c5c"></div>
<div class="t" style="left:118px;top:733.5px;font-size:9.7px;color:#f0f0f0">Doc: 5.49M/25.3M</div>
<div class="a" style="left:243px;top:730px;width:1px;height:16px;background:#3a3a3a"></div>
<div class="a" style="left:244px;top:731px;width:12px;height:15px;background:#565656;box-shadow:inset 0 1px 0 #6a6a6a"></div>
<svg style="left:246px;top:733px" width="8" height="12" viewBox="0 0 8 12"><path d="M1 0.6 L7.4 6 L1 11.2Z" fill="#222" opacity="0.7"/><path d="M1 1.4 L7.4 6.1 L1 11Z" fill="#f2f2f2"/></svg>
<div class="a" style="left:0;top:746px;width:1038px;height:2px;background:#2a2a2a"></div>
<div class="a" style="left:0;top:748px;width:1038px;height:20px;background:linear-gradient(#2c2c2c 0 1px,#434343 1px 2px,#3a3a3a 2px 17px,#2a2a2a 17px 18px,#4e4e4e 18px 19px,#262626 19px 20px)"></div>
<div class="a" style="left:1px;top:749px;width:71px;height:16px;background:#535353;box-shadow:inset 0 1px 0 #636363"></div>
<div class="t" style="left:8px;top:754px;font-size:9.6px;font-weight:700;color:#f0f0f0">Mini Bridge</div>
<div class="a" style="left:72px;top:749px;width:55px;height:16px;background:#3c3c3c;border-left:1px solid #2e2e2e;border-right:1px solid #2e2e2e;box-shadow:inset 0 1px 0 #464646"></div>
<div class="t" style="left:79px;top:754px;font-size:9.7px;font-weight:700;color:#9c9c9c">Timeline</div>
<svg style="left:1019px;top:753px" width="16" height="9" viewBox="1019 753 16 9"><path d="M1020 756.5H1025L1022.5 759.3Z" fill="#d0d0d0"/><g fill="#d0d0d0"><rect x="1026" y="753.5" width="8" height="1.2"/><rect x="1026" y="755.7" width="8" height="1.2"/><rect x="1026" y="757.9" width="8" height="1.2"/><rect x="1026" y="760.1" width="8" height="1.2"/></g></svg>

<!-- DOCK -->
<div class="a" style="left:1038px;top:63px;width:3px;height:705px;background:linear-gradient(90deg,#262626 0 1px,#3a3a3a 1px 2px,#262626 2px 3px)"></div>
<div class="a" style="left:1041px;top:63px;width:262px;height:12px;background:#3a3a3a;box-shadow:inset 0 1px 0 #464646"></div>
<svg style="left:1066px;top:66px" width="9" height="6" viewBox="0 0 9 6"><path d="M4 0.2V5.8L0.6 3Z M8.2 0.2V5.8L4.8 3Z" fill="#c8c8c8"/></svg>
<svg style="left:1291px;top:66px" width="9" height="6" viewBox="0 0 9 6"><path d="M0.8 0.2V5.8L4.2 3Z M5 0.2V5.8L8.4 3Z" fill="#c8c8c8"/></svg>
<div class="a" style="left:1041px;top:74px;width:262px;height:1px;background:#262626"></div>
<div class="a" style="left:1041px;top:75px;width:37px;height:693px;background:#535353"></div>
<div class="a" style="left:1078px;top:75px;width:3px;height:693px;background:linear-gradient(90deg,#262626 0 1px,#3a3a3a 1px 2px,#262626 2px 3px)"></div>
<div class="a" style="left:1041px;top:115px;width:37px;height:1px;background:#2e2e2e"></div>
<div class="a" style="left:1041px;top:75px;width:37px;height:1px;background:#626262"></div>
<div class="a" style="left:1050px;top:79px;width:20px;height:3px;background:repeating-linear-gradient(90deg,#262626 0 1px,transparent 1px 2px)"></div>
<div class="a" style="left:1041px;top:184px;width:37px;height:1px;background:#2e2e2e"></div>
<div class="a" style="left:1041px;top:116px;width:37px;height:1px;background:#626262"></div>
<div class="a" style="left:1050px;top:120px;width:20px;height:3px;background:repeating-linear-gradient(90deg,#262626 0 1px,transparent 1px 2px)"></div>
<div class="a" style="left:1041px;top:253px;width:37px;height:1px;background:#2e2e2e"></div>
<div class="a" style="left:1041px;top:185px;width:37px;height:1px;background:#626262"></div>
<div class="a" style="left:1050px;top:189px;width:20px;height:3px;background:repeating-linear-gradient(90deg,#262626 0 1px,transparent 1px 2px)"></div>
<div class="a" style="left:1041px;top:322px;width:37px;height:1px;background:#2e2e2e"></div>
<div class="a" style="left:1041px;top:254px;width:37px;height:1px;background:#626262"></div>
<div class="a" style="left:1050px;top:258px;width:20px;height:3px;background:repeating-linear-gradient(90deg,#262626 0 1px,transparent 1px 2px)"></div>
<div class="a" style="left:1041px;top:363px;width:37px;height:1px;background:#2e2e2e"></div>
<div class="a" style="left:1041px;top:323px;width:37px;height:1px;background:#626262"></div>
<div class="a" style="left:1050px;top:327px;width:20px;height:3px;background:repeating-linear-gradient(90deg,#262626 0 1px,transparent 1px 2px)"></div>
<div class="a" style="left:1041px;top:404px;width:37px;height:1px;background:#2e2e2e"></div>
<div class="a" style="left:1041px;top:364px;width:37px;height:1px;background:#626262"></div>
<div class="a" style="left:1050px;top:368px;width:20px;height:3px;background:repeating-linear-gradient(90deg,#262626 0 1px,transparent 1px 2px)"></div>
<div class="a" style="left:1041px;top:445px;width:37px;height:1px;background:#2e2e2e"></div>
<div class="a" style="left:1041px;top:405px;width:37px;height:1px;background:#626262"></div>
<div class="a" style="left:1050px;top:409px;width:20px;height:3px;background:repeating-linear-gradient(90deg,#262626 0 1px,transparent 1px 2px)"></div>
<svg style="left:1041px;top:75px" width="37" height="380" viewBox="1041 75 37 380">
 <g fill="#3e3e3e" stroke="#c8c8c8" stroke-width="1"><rect x="1054.5" y="90.5" width="4.2" height="4.2"/><rect x="1054.5" y="96.5" width="4.2" height="4.2"/></g>
 <rect x="1054" y="102" width="5.2" height="5" fill="#c4c4c4"/>
 <path d="M1062 91 H1067.6 L1062 96.6Z" fill="#c8c8c8"/>
 <path d="M1064.6 93.6 C1068.6 96 1068.6 101.5 1063 105" fill="none" stroke="#c8c8c8" stroke-width="1.9"/>
 <path d="M1053.5 133.5 L1057.5 131.5 L1061.5 133.5 V138.5 L1057.5 140.5 L1053.5 138.5Z" fill="#b8b8b8" stroke="#3a3a3a" stroke-width="0.6"/>
 <path d="M1053.5 133.5 L1057.5 135.5 L1061.5 133.5 M1057.5 135.5 V140.5" fill="none" stroke="#555" stroke-width="0.8"/>
 <rect x="1063" y="131" width="3.5" height="3" fill="#c8c8c8"/><rect x="1063" y="136" width="3.5" height="3" fill="#c8c8c8"/>
 <rect x="1053" y="142" width="14" height="4" fill="#c8c8c8"/><path d="M1063 143.5h3l-1.5 1.8z" fill="#333"/>
 <circle cx="1060" cy="167" r="8.6" fill="#bcbcbc" stroke="#3a3a3a" stroke-width="0.6"/>
 <rect x="1058.6" y="165" width="2.8" height="7.2" fill="#4a4a4a"/><circle cx="1060" cy="162" r="1.6" fill="#4a4a4a"/>
 <text x="1053" y="215.5" font-family="Liberation Sans" font-weight="700" font-size="17.5" fill="#c0c0c0" opacity="0.99">A</text>
 <rect x="1066" y="199" width="1.2" height="17" fill="#c0c0c0"/>
 <path d="M1062 230.5 H1058.5 C1055 230.5 1053.5 232.5 1053.5 235 C1053.5 237.5 1055 239.5 1058.5 239.5 V244 H1060.5 V232 H1062 V244 H1064 V230.5Z" fill="#c0c0c0"/>
 <path d="M1060 270 H1058 C1055.5 270 1054.5 271.5 1054.5 273.5 C1054.5 275.5 1055.5 277 1058 277 V283 H1059.5 V271.5 H1061 V283 H1062.5 V270Z" fill="#c0c0c0"/>
 <g fill="none" stroke="#c0c0c0" stroke-width="1"><rect x="1051.5" y="278.5" width="5" height="5"/><rect x="1053.5" y="280.5" width="5" height="5" fill="#777"/></g>
 <text x="1057.5" y="311" font-family="Liberation Sans" font-weight="700" font-size="15.5" fill="#c0c0c0" opacity="0.99">A</text>
 <g fill="none" stroke="#c0c0c0" stroke-width="1"><rect x="1051.5" y="305.5" width="5" height="5"/><rect x="1053.5" y="307.5" width="5" height="5" fill="#777"/></g>
 <path d="M1053 343 C1053 338.5 1057 337.5 1061 337.8 C1066 338 1069 340.5 1069 346 C1069 352 1065 355.5 1059.5 355.5 C1055 355.5 1052.5 352 1053 343Z" fill="#bfbfbf" stroke="#3a3a3a" stroke-width="0.5"/>
 <text x="1061" y="350.5" font-family="Liberation Sans" font-weight="700" font-size="9" fill="#444" text-anchor="middle">ku</text>
 <g fill="#f4f4f4"><rect x="1052.5" y="379" width="7.5" height="7.5"/><rect x="1061" y="379" width="7.5" height="7.5"/><rect x="1052.5" y="387.5" width="7.5" height="7.5"/><rect x="1061" y="387.5" width="7.5" height="7.5"/></g>
 <rect x="1052" y="422.5" width="16" height="11.5" fill="#d0d0d0"/>
 <g><rect x="1053.5" y="424" width="4" height="4" fill="#3a3a3a"/><rect x="1058" y="424" width="4" height="4" fill="#666"/><rect x="1062.5" y="424" width="4" height="4" fill="#888"/><rect x="1053.5" y="428.5" width="4" height="4" fill="#888"/><rect x="1058" y="428.5" width="4" height="4" fill="#777"/><rect x="1062.5" y="428.5" width="4" height="4" fill="#555"/></g>
</svg>
<div class="a" style="left:1081px;top:75px;width:222px;height:693px;background:#535353"></div>
<div class="a" style="left:1081px;top:75px;width:222px;height:17px;background:#393939"></div>
<div class="a" style="left:1081px;top:75px;width:43px;height:17px;background:#535353;box-shadow:inset 0 1px 0 #646464"></div>
<div class="a" style="left:1124px;top:75px;width:40px;height:16px;background:#3c3c3c;box-shadow:inset 0 1px 0 #474747"></div>
<div class="a" style="left:1164px;top:75px;width:1px;height:16px;background:#2c2c2c"></div>
<div class="a" style="left:1124px;top:91px;width:179px;height:1px;background:#2c2c2c"></div>
<div class="t" style="left:1088px;top:79px;font-size:9.3px;font-weight:700;color:#f0f0f0">Layers</div>
<div class="t" style="left:1131.5px;top:79px;font-size:9.3px;font-weight:700;color:#a0a0a0">Paths</div>
<svg style="left:1284px;top:79px" width="16" height="9" viewBox="1284 79 16 9"><path d="M1285 82H1290L1287.5 84.8Z" fill="#d0d0d0"/><g fill="#d0d0d0"><rect x="1291" y="79" width="8" height="1.2"/><rect x="1291" y="81.2" width="8" height="1.2"/><rect x="1291" y="83.4" width="8" height="1.2"/><rect x="1291" y="85.6" width="8" height="1.2"/></g></svg>
<div class="a" style="left:1081px;top:119px;width:222px;height:1px;background:#2e2e2e"></div>
<div class="a" style="left:1081px;top:120px;width:222px;height:1px;background:#5e5e5e"></div>
<div class="a dd" style="left:1085px;top:96px;width:70px;height:20px"></div>
<svg style="left:1090px;top:99px" width="12" height="12" viewBox="0 0 12 12"><circle cx="7" cy="4.8" r="3.3" fill="none" stroke="#d8d8d8" stroke-width="1.3"/><path d="M4.6 7.2 L1.3 10.5" stroke="#d8d8d8" stroke-width="1.8" stroke-linecap="round"/></svg>
<div class="t" style="left:1107px;top:101px;font-size:10.3px;color:#f0f0f0">Kind</div>
<svg style="left:1144px;top:101px" width="7" height="9" viewBox="0 0 7 9"><path d="M0.5 3.6H6.5L3.5 0.4Z M0.5 5.4H6.5L3.5 8.6Z" fill="#e8e8e8"/></svg>
<svg style="left:1160px;top:95px" width="143" height="22" viewBox="1160 95 143 22">
 <rect x="1167.5" y="99.5" width="12" height="11" fill="none" stroke="#c0c0c0" stroke-width="1"/>
 <path d="M1169 109 L1172 104.5 L1174 107 L1175.5 105.5 L1178 109Z" fill="#c0c0c0"/><path d="M1176.5 101.5v3M1175 103h3" stroke="#c0c0c0" stroke-width="0.9"/>
 <circle cx="1197" cy="105" r="5" fill="#7a7a7a" stroke="#c4c4c4" stroke-width="1.1"/>
 <path d="M1193.46 108.54 A5 5 0 0 1 1200.54 101.46 Z" fill="#c4c4c4"/>
 <path d="M1193.8 108.2 L1200.2 101.8" stroke="#4a4a4a" stroke-width="1"/>
 <text x="1221" y="110.5" font-family="Liberation Serif" font-size="16" fill="#c4c4c4" text-anchor="middle" opacity="0.99">T</text>
 <rect x="1241.5" y="101.5" width="8" height="8" fill="none" stroke="#c0c0c0" stroke-width="1"/>
 <g fill="#535353" stroke="#c0c0c0" stroke-width="0.9"><circle cx="1241.5" cy="101.5" r="1.4"/><circle cx="1249.5" cy="101.5" r="1.4"/><circle cx="1241.5" cy="109.5" r="1.4"/><circle cx="1249.5" cy="109.5" r="1.4"/></g>
 <path d="M1268.5 100.5 H1272.5 L1275 103 V110.5 H1268.5Z" fill="none" stroke="#c0c0c0" stroke-width="1"/>
 <rect x="1264" y="105" width="5.5" height="7" fill="#c0c0c0"/>
 <rect x="1288.5" y="96.5" width="10" height="18" rx="1" fill="#3a3a3a" stroke="#2a2a2a" stroke-width="1"/>
 <rect x="1289.5" y="97.5" width="8" height="8" fill="#888"/>
</svg>
<div class="a" style="left:1081px;top:147px;width:222px;height:1px;background:#2e2e2e"></div>
<div class="a" style="left:1081px;top:148px;width:222px;height:1px;background:#5e5e5e"></div>
<div class="a dd" style="left:1085px;top:124px;width:111px;height:20px;opacity:0.75"></div>
<div class="t" style="left:1093px;top:129px;font-size:10px;color:#a4a4a4">Pass Through</div>
<svg style="left:1185px;top:129px" width="7" height="9" viewBox="0 0 7 9"><path d="M0.5 3.6H6.5L3.5 0.4Z M0.5 5.4H6.5L3.5 8.6Z" fill="#9a9a9a"/></svg>
<div class="t" style="left:1203px;top:128.5px;font-size:10px;color:#a8a8a8">Opacity:</div>
<div class="a fld" style="left:1245px;top:124px"><div class="fb"></div></div>
<div class="t" style="left:1250px;top:129.5px;font-size:10px;color:#7c7c7c">100%</div>
<svg style="left:1286px;top:132px" width="7" height="4" viewBox="0 0 7 4"><path d="M0.5 0.3H6.3L3.4 3.8Z" fill="#9a9a9a"/></svg>
<div class="t" style="left:1087px;top:158px;font-size:10px;color:#c4c4c4">Lock:</div>
<svg style="left:1118px;top:153px" width="82" height="17" viewBox="1118 153 82 17">
 <rect x="1120.5" y="157.5" width="10" height="10" fill="#6a6a6a" stroke="#7a7a7a" stroke-width="1"/>
 <g fill="#4e4e4e"><rect x="1121" y="158" width="3" height="3"/><rect x="1127" y="158" width="3" height="3"/><rect x="1124" y="161" width="3" height="3"/><rect x="1121" y="164" width="3" height="3"/><rect x="1127" y="164" width="3" height="3"/></g>
 <path d="M1156 154 L1148.5 162" stroke="#7c7c7c" stroke-width="2"/>
 <path d="M1140 167.5 C1143 165.5 1145.5 162 1149.5 162.5 C1150 166 1146.5 168.5 1140 167.5Z" fill="#7c7c7c"/>
 <path d="M1169.5 155v13 M1163 161.5h13" stroke="#7c7c7c" stroke-width="1"/>
 <path d="M1167.5 157.5l2-2 2 2 M1167.5 165.5l2 2 2-2 M1165 159.5l-2 2 2 2 M1174 159.5l2 2-2 2" fill="none" stroke="#7c7c7c" stroke-width="1.2"/>
 <path d="M1189 161.5 V159.5 C1189 155.3 1195 155.3 1195 159.5 V161.5" fill="none" stroke="#7c7c7c" stroke-width="1.6"/>
 <rect x="1187" y="161.5" width="10" height="7" rx="0.8" fill="#7c7c7c"/><rect x="1191.3" y="163.8" width="1.5" height="2.6" fill="#3a3a3a"/>
</svg>
<div class="t" style="left:1225px;top:156.5px;font-size:10px;color:#c4c4c4">Fill:</div>
<div class="a fld" style="left:1245px;top:152px"><div class="fb"></div></div>
<div class="t" style="left:1250px;top:157.5px;font-size:10px;color:#7c7c7c">100%</div>
<svg style="left:1286px;top:160px" width="7" height="4" viewBox="0 0 7 4"><path d="M0.5 0.3H6.3L3.4 3.8Z" fill="#9a9a9a"/></svg>
<div class="a" style="left:1081px;top:177px;width:207px;height:1px;background:#2e2e2e"></div>
<div class="a" style="left:1112px;top:178px;width:176px;height:21px;background:#5a687b"></div>
<div class="a" style="left:1081px;top:199px;width:207px;height:1px;background:#373737"></div>
<div class="a" style="left:1111px;top:178px;width:1px;height:21px;background:#373737"></div>
<div class="a" style="left:1090px;top:182px;width:12px;height:12px;border:1px solid;border-color:#787878 #2e2e2e #2e2e2e #787878"></div>
<svg style="left:1116px;top:183px" width="28" height="12" viewBox="0 0 28 12"><path d="M0.9 0.2 L7.2 5.3 L0.9 10.4Z" fill="#e8e8e8"/><defs><linearGradient id="fg" x1="0" y1="0" x2="0" y2="1"><stop offset="0" stop-color="#e4e4e4"/><stop offset="1" stop-color="#b0b4bc"/></linearGradient></defs><path d="M12.8 0.8 H17.8 L18.8 2 H27 V11 H12.8Z" fill="url(#fg)"/><rect x="12.8" y="-0.2" width="5" height="1" fill="#333"/></svg>
<div class="t" style="left:1156px;top:185.5px;font-size:10.2px;color:#f4f4f4">Image</div>
<div class="a" style="left:1081px;top:222px;width:207px;height:1px;background:#373737"></div>
<div class="a" style="left:1111px;top:200px;width:1px;height:22px;background:#373737"></div>
<svg style="left:1089px;top:206px" width="14" height="10" viewBox="0 0 14 10"><path d="M-0.2 5 Q7 -5 14.2 5 Q7 15 -0.2 5Z" fill="#2e2e2e" opacity="0.5"/><path d="M0.4 5 Q7 -3.8 13.6 5 Q7 13.8 0.4 5Z" fill="#afafaf"/><circle cx="7" cy="5" r="2.7" fill="#363636"/><circle cx="8" cy="4" r="0.9" fill="#d8d8d8"/></svg>
<svg style="left:1115px;top:205px" width="32" height="12" viewBox="0 0 32 12"><path d="M0.2 3.4 H9.1 L4.65 10.4Z" fill="#e8e8e8"/><defs><linearGradient id="fo" x1="0" y1="0" x2="0" y2="1"><stop offset="0" stop-color="#b8b8b8"/><stop offset="1" stop-color="#8a8a8a"/></linearGradient></defs><path d="M13.5 0.5 H18 L19 1.8 H27.5 V5 H13.5Z" fill="#7a7a7a" stroke="#2e2e2e" stroke-width="0.6"/><path d="M12 5 H30 L28.8 11.5 H13.2Z" fill="url(#fo)"/></svg>
<div class="t" style="left:1156px;top:208.0px;font-size:10.2px;color:#f0f0f0">Header</div>
<div class="a" style="left:1081px;top:261px;width:207px;height:1px;background:#373737"></div>
<div class="a" style="left:1111px;top:223px;width:1px;height:38px;background:#373737"></div>
<svg style="left:1089px;top:237px" width="14" height="10" viewBox="0 0 14 10"><path d="M-0.2 5 Q7 -5 14.2 5 Q7 15 -0.2 5Z" fill="#2e2e2e" opacity="0.5"/><path d="M0.4 5 Q7 -3.8 13.6 5 Q7 13.8 0.4 5Z" fill="#afafaf"/><circle cx="7" cy="5" r="2.7" fill="#363636"/><circle cx="8" cy="4" r="0.9" fill="#d8d8d8"/></svg>
<svg style="left:1139px;top:235px" width="16" height="16" viewBox="0 0 16 16"><defs><linearGradient id="tg" x1="0" y1="0" x2="0" y2="1"><stop offset="0" stop-color="#dadada"/><stop offset="1" stop-color="#a4a4a4"/></linearGradient></defs><path d="M0.3 0.2 H15.4 V5 H14.6 C14.2 2.8 13 2.2 11 2.2 H9.4 V12.8 C9.4 14 10 14.3 12.3 14.4 V15 H3.1 V14.4 C5.4 14.3 6 14 6 12.8 V2.2 H4.5 C2.5 2.2 1.3 2.8 0.9 5 H0.3Z" fill="url(#tg)"/><rect x="0.3" y="-0.8" width="15" height="1" fill="#2e2e2e"/></svg>
<div class="t" style="left:1173px;top:239.0px;font-size:10.2px;color:#f0f0f0">About</div>
<div class="a" style="left:1081px;top:300px;width:207px;height:1px;background:#373737"></div>
<div class="a" style="left:1111px;top:262px;width:1px;height:38px;background:#373737"></div>
<svg style="left:1089px;top:276px" width="14" height="10" viewBox="0 0 14 10"><path d="M-0.2 5 Q7 -5 14.2 5 Q7 15 -0.2 5Z" fill="#2e2e2e" opacity="0.5"/><path d="M0.4 5 Q7 -3.8 13.6 5 Q7 13.8 0.4 5Z" fill="#afafaf"/><circle cx="7" cy="5" r="2.7" fill="#363636"/><circle cx="8" cy="4" r="0.9" fill="#d8d8d8"/></svg>
<svg style="left:1139px;top:274px" width="16" height="16" viewBox="0 0 16 16"><defs><linearGradient id="tg" x1="0" y1="0" x2="0" y2="1"><stop offset="0" stop-color="#dadada"/><stop offset="1" stop-color="#a4a4a4"/></linearGradient></defs><path d="M0.3 0.2 H15.4 V5 H14.6 C14.2 2.8 13 2.2 11 2.2 H9.4 V12.8 C9.4 14 10 14.3 12.3 14.4 V15 H3.1 V14.4 C5.4 14.3 6 14 6 12.8 V2.2 H4.5 C2.5 2.2 1.3 2.8 0.9 5 H0.3Z" fill="url(#tg)"/><rect x="0.3" y="-0.8" width="15" height="1" fill="#2e2e2e"/></svg>
<div class="t" style="left:1173px;top:278.0px;font-size:10.2px;color:#f0f0f0">Sell</div>
<div class="a" style="left:1081px;top:339px;width:207px;height:1px;background:#373737"></div>
<div class="a" style="left:1111px;top:301px;width:1px;height:38px;background:#373737"></div>
<svg style="left:1089px;top:315px" width="14" height="10" viewBox="0 0 14 10"><path d="M-0.2 5 Q7 -5 14.2 5 Q7 15 -0.2 5Z" fill="#2e2e2e" opacity="0.5"/><path d="M0.4 5 Q7 -3.8 13.6 5 Q7 13.8 0.4 5Z" fill="#afafaf"/><circle cx="7" cy="5" r="2.7" fill="#363636"/><circle cx="8" cy="4" r="0.9" fill="#d8d8d8"/></svg>
<svg style="left:1139px;top:313px" width="16" height="16" viewBox="0 0 16 16"><defs><linearGradient id="tg" x1="0" y1="0" x2="0" y2="1"><stop offset="0" stop-color="#dadada"/><stop offset="1" stop-color="#a4a4a4"/></linearGradient></defs><path d="M0.3 0.2 H15.4 V5 H14.6 C14.2 2.8 13 2.2 11 2.2 H9.4 V12.8 C9.4 14 10 14.3 12.3 14.4 V15 H3.1 V14.4 C5.4 14.3 6 14 6 12.8 V2.2 H4.5 C2.5 2.2 1.3 2.8 0.9 5 H0.3Z" fill="url(#tg)"/><rect x="0.3" y="-0.8" width="15" height="1" fill="#2e2e2e"/></svg>
<div class="t" style="left:1173px;top:317.0px;font-size:10.2px;color:#f0f0f0">Buy</div>
<div class="a" style="left:1081px;top:378px;width:207px;height:1px;background:#373737"></div>
<div class="a" style="left:1111px;top:340px;width:1px;height:38px;background:#373737"></div>
<svg style="left:1089px;top:354px" width="14" height="10" viewBox="0 0 14 10"><path d="M-0.2 5 Q7 -5 14.2 5 Q7 15 -0.2 5Z" fill="#2e2e2e" opacity="0.5"/><path d="M0.4 5 Q7 -3.8 13.6 5 Q7 13.8 0.4 5Z" fill="#afafaf"/><circle cx="7" cy="5" r="2.7" fill="#363636"/><circle cx="8" cy="4" r="0.9" fill="#d8d8d8"/></svg>
<svg style="left:1139px;top:352px" width="16" height="16" viewBox="0 0 16 16"><defs><linearGradient id="tg" x1="0" y1="0" x2="0" y2="1"><stop offset="0" stop-color="#dadada"/><stop offset="1" stop-color="#a4a4a4"/></linearGradient></defs><path d="M0.3 0.2 H15.4 V5 H14.6 C14.2 2.8 13 2.2 11 2.2 H9.4 V12.8 C9.4 14 10 14.3 12.3 14.4 V15 H3.1 V14.4 C5.4 14.3 6 14 6 12.8 V2.2 H4.5 C2.5 2.2 1.3 2.8 0.9 5 H0.3Z" fill="url(#tg)"/><rect x="0.3" y="-0.8" width="15" height="1" fill="#2e2e2e"/></svg>
<div class="t" style="left:1173px;top:356.0px;font-size:10.2px;color:#f0f0f0">Agent</div>
<div class="a" style="left:1081px;top:417px;width:207px;height:1px;background:#373737"></div>
<div class="a" style="left:1111px;top:379px;width:1px;height:38px;background:#373737"></div>
<svg style="left:1089px;top:393px" width="14" height="10" viewBox="0 0 14 10"><path d="M-0.2 5 Q7 -5 14.2 5 Q7 15 -0.2 5Z" fill="#2e2e2e" opacity="0.5"/><path d="M0.4 5 Q7 -3.8 13.6 5 Q7 13.8 0.4 5Z" fill="#afafaf"/><circle cx="7" cy="5" r="2.7" fill="#363636"/><circle cx="8" cy="4" r="0.9" fill="#d8d8d8"/></svg>
<svg style="left:1139px;top:391px" width="16" height="16" viewBox="0 0 16 16"><defs><linearGradient id="tg" x1="0" y1="0" x2="0" y2="1"><stop offset="0" stop-color="#dadada"/><stop offset="1" stop-color="#a4a4a4"/></linearGradient></defs><path d="M0.3 0.2 H15.4 V5 H14.6 C14.2 2.8 13 2.2 11 2.2 H9.4 V12.8 C9.4 14 10 14.3 12.3 14.4 V15 H3.1 V14.4 C5.4 14.3 6 14 6 12.8 V2.2 H4.5 C2.5 2.2 1.3 2.8 0.9 5 H0.3Z" fill="url(#tg)"/><rect x="0.3" y="-0.8" width="15" height="1" fill="#2e2e2e"/></svg>
<div class="t" style="left:1173px;top:395.0px;font-size:10.2px;color:#f0f0f0">Property</div>
<div class="a" style="left:1081px;top:487px;width:207px;height:1px;background:#373737"></div>
<div class="a" style="left:1111px;top:418px;width:1px;height:69px;background:#373737"></div>
<svg style="left:1089px;top:429px" width="14" height="10" viewBox="0 0 14 10"><path d="M-0.2 5 Q7 -5 14.2 5 Q7 15 -0.2 5Z" fill="#2e2e2e" opacity="0.5"/><path d="M0.4 5 Q7 -3.8 13.6 5 Q7 13.8 0.4 5Z" fill="#afafaf"/><circle cx="7" cy="5" r="2.7" fill="#363636"/><circle cx="8" cy="4" r="0.9" fill="#d8d8d8"/></svg>
<div class="a" style="left:1131px;top:421px;width:32px;height:26px;background:#fff;border:1px solid #111"></div>
<div class="a" style="left:1132px;top:422px;width:30px;height:24px;background-image:linear-gradient(45deg,#cfcfcf 25%,transparent 25%,transparent 75%,#cfcfcf 75%),linear-gradient(45deg,#cfcfcf 25%,transparent 25%,transparent 75%,#cfcfcf 75%);background-size:8px 8px;background-position:0 0,4px 4px;background-color:#fff"></div>
<div class="a" style="left:1132px;top:422px;width:30px;height:5px;background:#fff"></div>
<div class="a" style="left:1150px;top:432px;width:13px;height:15px;background:#535353"></div>
<svg style="left:1150px;top:433px" width="13" height="14" viewBox="0 0 13 14"><path d="M5 1.5H10L12 3.5V11H5Z" fill="none" stroke="#c4c4c4" stroke-width="1"/><rect x="1.5" y="6.5" width="5.5" height="6.5" fill="#c4c4c4"/></svg>
<div class="t" style="left:1173px;top:431px;font-size:10.2px;color:#f0f0f0">Logo</div>
<div class="t" style="left:1261px;top:425.5px;font-size:15px;letter-spacing:0.5px;font-style:italic;color:#d0d0d0;font-family:'Liberation Serif'">fx</div>
<div class="a" style="left:1277px;top:418px;width:11px;height:32px;background:linear-gradient(#b4b4b4,#6c6c6c)"></div>
<svg style="left:1279px;top:431px" width="7" height="5" viewBox="0 0 7 5"><path d="M0.3 4.5H6.7L3.5 0.5Z" fill="#3c3c3c"/></svg>
<svg style="left:1146px;top:454px" width="14" height="10" viewBox="0 0 14 10"><path d="M-0.2 5 Q7 -5 14.2 5 Q7 15 -0.2 5Z" fill="#2e2e2e" opacity="0.5"/><path d="M0.4 5 Q7 -3.8 13.6 5 Q7 13.8 0.4 5Z" fill="#afafaf"/><circle cx="7" cy="5" r="2.7" fill="#363636"/><circle cx="8" cy="4" r="0.9" fill="#d8d8d8"/></svg>
<div class="t" style="left:1166px;top:455px;font-size:10.2px;color:#f0f0f0">Effects</div>
<svg style="left:1163px;top:473px" width="14" height="10" viewBox="0 0 14 10"><path d="M-0.2 5 Q7 -5 14.2 5 Q7 15 -0.2 5Z" fill="#2e2e2e" opacity="0.5"/><path d="M0.4 5 Q7 -3.8 13.6 5 Q7 13.8 0.4 5Z" fill="#afafaf"/><circle cx="7" cy="5" r="2.7" fill="#363636"/><circle cx="8" cy="4" r="0.9" fill="#d8d8d8"/></svg>
<div class="t" style="left:1183px;top:473.5px;font-size:10.2px;color:#f0f0f0;letter-spacing:-0.33px">Color Overlay</div>
<div class="a" style="left:1081px;top:526px;width:207px;height:1px;background:#373737"></div>
<div class="a" style="left:1111px;top:488px;width:1px;height:38px;background:#373737"></div>
<div class="a" style="left:1090px;top:501px;width:12px;height:12px;border:1px solid;border-color:#787878 #2e2e2e #2e2e2e #787878"></div>
<svg style="left:1139px;top:500px" width="16" height="16" viewBox="0 0 16 16"><defs><linearGradient id="tg" x1="0" y1="0" x2="0" y2="1"><stop offset="0" stop-color="#dadada"/><stop offset="1" stop-color="#a4a4a4"/></linearGradient></defs><path d="M0.3 0.2 H15.4 V5 H14.6 C14.2 2.8 13 2.2 11 2.2 H9.4 V12.8 C9.4 14 10 14.3 12.3 14.4 V15 H3.1 V14.4 C5.4 14.3 6 14 6 12.8 V2.2 H4.5 C2.5 2.2 1.3 2.8 0.9 5 H0.3Z" fill="url(#tg)"/><rect x="0.3" y="-0.8" width="15" height="1" fill="#2e2e2e"/></svg>
<div class="t" style="left:1173px;top:504.0px;font-size:10.2px;color:#f0f0f0">Login</div>
<div class="a" style="left:1081px;top:565px;width:207px;height:1px;background:#373737"></div>
<div class="a" style="left:1111px;top:527px;width:1px;height:38px;background:#373737"></div>
<div class="a" style="left:1090px;top:540px;width:12px;height:12px;border:1px solid;border-color:#787878 #2e2e2e #2e2e2e #787878"></div>
<svg style="left:1139px;top:539px" width="16" height="16" viewBox="0 0 16 16"><defs><linearGradient id="tg" x1="0" y1="0" x2="0" y2="1"><stop offset="0" stop-color="#dadada"/><stop offset="1" stop-color="#a4a4a4"/></linearGradient></defs><path d="M0.3 0.2 H15.4 V5 H14.6 C14.2 2.8 13 2.2 11 2.2 H9.4 V12.8 C9.4 14 10 14.3 12.3 14.4 V15 H3.1 V14.4 C5.4 14.3 6 14 6 12.8 V2.2 H4.5 C2.5 2.2 1.3 2.8 0.9 5 H0.3Z" fill="url(#tg)"/><rect x="0.3" y="-0.8" width="15" height="1" fill="#2e2e2e"/></svg>
<div class="t" style="left:1173px;top:543.0px;font-size:10.2px;color:#f0f0f0">Sign up</div>
<div class="a" style="left:1081px;top:604px;width:207px;height:1px;background:#373737"></div>
<div class="a" style="left:1111px;top:566px;width:1px;height:38px;background:#373737"></div>
<svg style="left:1089px;top:580px" width="14" height="10" viewBox="0 0 14 10"><path d="M-0.2 5 Q7 -5 14.2 5 Q7 15 -0.2 5Z" fill="#2e2e2e" opacity="0.5"/><path d="M0.4 5 Q7 -3.8 13.6 5 Q7 13.8 0.4 5Z" fill="#afafaf"/><circle cx="7" cy="5" r="2.7" fill="#363636"/><circle cx="8" cy="4" r="0.9" fill="#d8d8d8"/></svg>
<svg style="left:1131px;top:577px" width="33" height="17" viewBox="0 0 33 17"><path d="M0 0 H31.5 C32.5 0 32.5 3.2 31.5 3.2 H19 V16.2 H0Z" fill="#0a0a0a"/><rect x="1" y="1" width="30.5" height="1.4" fill="#f0f0f0"/><rect x="1" y="1" width="17" height="14.2" fill="#f0f0f0"/><rect x="2.2" y="2.2" width="15.8" height="12" rx="1.5" fill="#04121c"/><rect x="21.3" y="5" width="9.4" height="9.3" fill="none" stroke="#c8c8c8" stroke-width="1"/><g fill="#3a3a3a" stroke="#cfcfcf" stroke-width="1"><circle cx="21.3" cy="5" r="1.3"/><circle cx="30.7" cy="5" r="1.3"/><circle cx="21.3" cy="14.3" r="1.3"/><circle cx="30.7" cy="14.3" r="1.3"/></g></svg>
<div class="t" style="left:1173px;top:582.0px;font-size:10.2px;color:#f0f0f0;letter-spacing:-0.15px">Rounded Rectangle ...</div>
<div class="a" style="left:1081px;top:643px;width:207px;height:1px;background:#373737"></div>
<div class="a" style="left:1111px;top:605px;width:1px;height:38px;background:#373737"></div>
<svg style="left:1089px;top:619px" width="14" height="10" viewBox="0 0 14 10"><path d="M-0.2 5 Q7 -5 14.2 5 Q7 15 -0.2 5Z" fill="#2e2e2e" opacity="0.5"/><path d="M0.4 5 Q7 -3.8 13.6 5 Q7 13.8 0.4 5Z" fill="#afafaf"/><circle cx="7" cy="5" r="2.7" fill="#363636"/><circle cx="8" cy="4" r="0.9" fill="#d8d8d8"/></svg>
<svg style="left:1131px;top:616px" width="33" height="17" viewBox="0 0 33 17"><path d="M0 0 H31.5 C32.5 0 32.5 3.2 31.5 3.2 H19 V16.2 H0Z" fill="#0a0a0a"/><rect x="1" y="1" width="30.5" height="1.4" fill="#f0f0f0"/><rect x="1" y="1" width="17" height="14.2" fill="#f0f0f0"/><rect x="2.2" y="2.2" width="15.8" height="12" rx="1.5" fill="#04121c"/><rect x="21.3" y="5" width="9.4" height="9.3" fill="none" stroke="#c8c8c8" stroke-width="1"/><g fill="#3a3a3a" stroke="#cfcfcf" stroke-width="1"><circle cx="21.3" cy="5" r="1.3"/><circle cx="30.7" cy="5" r="1.3"/><circle cx="21.3" cy="14.3" r="1.3"/><circle cx="30.7" cy="14.3" r="1.3"/></g></svg>
<div class="t" style="left:1173px;top:621.0px;font-size:10.2px;color:#f0f0f0;letter-spacing:-0.15px">Rounded Rectangle 1</div>
<div class="a" style="left:1081px;top:675px;width:207px;height:1px;background:#373737"></div>
<div class="a" style="left:1111px;top:644px;width:1px;height:31px;background:#373737"></div>
<div class="a" style="left:1090px;top:653px;width:12px;height:12px;border:1px solid;border-color:#787878 #2e2e2e #2e2e2e #787878"></div>
<svg style="left:1131px;top:647px" width="33" height="26" viewBox="0 0 33 26"><rect x="0" y="0" width="32" height="25" fill="#0a0a0a"/><rect x="1" y="1" width="30" height="23" fill="#e8e8e8"/><rect x="2" y="2.5" width="28" height="19" fill="#3a7cc0"/><path d="M2 5 H30 V9 H2Z" fill="#6aa8e0"/><path d="M2 21.5 V9 L5 8 L6 10 L9 9 L11 11 L13 8 L16 7 L17 9 L20 10 L22 8 L25 9 L30 12 V21.5Z" fill="#263848"/><path d="M3 12 L7 11 L8 15 L4 17Z M12 12 L15 11 L16 16 L12 17Z M19 12 L21 11 L22 14 L19 15Z" fill="#a8c4dc"/><path d="M24 6 L28 4 L30 7 V15 L26 14 L23 10Z" fill="#d4b47a"/><path d="M5 17 L9 16 L10 20 L6 21Z M14 18 L18 17 L18 21 L14 21Z" fill="#5a98c8"/><path d="M20 16 L24 15 L25 19 L21 20Z" fill="#c89a50"/></svg>
<div class="t" style="left:1173px;top:656.5px;font-size:10.2px;color:#f0f0f0">Layer 1</div>
<div class="a" style="left:1081px;top:714px;width:207px;height:1px;background:#373737"></div>
<div class="a" style="left:1111px;top:676px;width:1px;height:38px;background:#373737"></div>
<svg style="left:1089px;top:690px" width="14" height="10" viewBox="0 0 14 10"><path d="M-0.2 5 Q7 -5 14.2 5 Q7 15 -0.2 5Z" fill="#2e2e2e" opacity="0.5"/><path d="M0.4 5 Q7 -3.8 13.6 5 Q7 13.8 0.4 5Z" fill="#afafaf"/><circle cx="7" cy="5" r="2.7" fill="#363636"/><circle cx="8" cy="4" r="0.9" fill="#d8d8d8"/></svg>
<svg style="left:1131px;top:687px" width="16" height="16" viewBox="0 0 16 16"><path d="M0 0 H15.5 V2.8 H3 V15.8 H0Z" fill="#0a0a0a"/><rect x="1" y="1" width="14" height="1.3" fill="#f0f0f0"/><rect x="1" y="2.3" width="1.4" height="12.5" fill="#1a3048"/><rect x="5.5" y="4.5" width="9" height="9.5" fill="none" stroke="#c8c8c8" stroke-width="1"/><g fill="#3a3a3a" stroke="#cfcfcf" stroke-width="1"><circle cx="5.5" cy="4.5" r="1.3"/><circle cx="14.5" cy="4.5" r="1.3"/><circle cx="5.5" cy="14" r="1.3"/><circle cx="14.5" cy="14" r="1.3"/></g></svg>
<div class="t" style="left:1157px;top:692.0px;font-size:10.2px;color:#f0f0f0">Rectangle 1</div>
<div class="a" style="left:1081px;top:747px;width:207px;height:1px;background:#373737"></div>
<div class="a" style="left:1111px;top:715px;width:1px;height:32px;background:#373737"></div>
<svg style="left:1089px;top:726px" width="14" height="10" viewBox="0 0 14 10"><path d="M-0.2 5 Q7 -5 14.2 5 Q7 15 -0.2 5Z" fill="#2e2e2e" opacity="0.5"/><path d="M0.4 5 Q7 -3.8 13.6 5 Q7 13.8 0.4 5Z" fill="#afafaf"/><circle cx="7" cy="5" r="2.7" fill="#363636"/><circle cx="8" cy="4" r="0.9" fill="#d8d8d8"/></svg>
<div class="a" style="left:1115px;top:718px;width:32px;height:25px;background:#fff;border:1px solid #111"></div>
<div class="t" style="left:1158px;top:728.0px;font-size:10.2px;font-style:italic;color:#f0f0f0">Background</div>
<svg style="left:1260px;top:724px" width="12" height="14" viewBox="0 0 12 14"><path d="M3 6.5 V4.5 C3 1.5 9 1.5 9 4.5 V6.5" fill="none" stroke="#b0b0b0" stroke-width="1.2"/><rect x="1.5" y="6.5" width="9" height="6.5" fill="none" stroke="#b0b0b0" stroke-width="1"/><rect x="5.4" y="8.5" width="1.2" height="2.5" fill="#b0b0b0"/></svg>
<div class="a" style="left:1288px;top:178px;width:15px;height:570px;background:#3a3a3a"></div>
<svg style="left:1292px;top:184px" width="7" height="4" viewBox="0 0 7 4"><path d="M0.3 4H6.7L3.5 0.3Z" fill="#e0e0e0"/></svg>
<div class="a" style="left:1290px;top:237px;width:12px;height:493px;background:linear-gradient(90deg,#8c8c8c,#7a7a7a);border-radius:3px"></div>
<svg style="left:1292px;top:738px" width="7" height="4" viewBox="0 0 7 4"><path d="M0.3 0H6.7L3.5 3.7Z" fill="#e0e0e0"/></svg>
<div class="a" style="left:1081px;top:748px;width:222px;height:1px;background:#2e2e2e"></div>
<div class="a" style="left:1081px;top:749px;width:222px;height:19px;background:#535353;box-shadow:inset 0 1px 0 #5e5e5e"></div>
<svg style="left:1095px;top:750px" width="190" height="18" viewBox="1095 750 190 18">
 <path d="M1104 756 H1102 C1099.5 756 1099.5 761 1102 761 H1104 M1108 756 H1110 C1112.5 756 1112.5 761 1110 761 H1108 M1103 758.5 H1109" fill="none" stroke="#8a8a8a" stroke-width="1.5"/>
 <text x="1129" y="764" font-family="Liberation Serif" font-style="italic" font-size="14" fill="#c0c0c0">fx</text>
 <path d="M1141 764h3l-1.5 1.8z" fill="#c0c0c0"/>
 <rect x="1156" y="754" width="13" height="10" fill="#c0c0c0"/><circle cx="1162.5" cy="759" r="2.8" fill="#535353"/>
 <circle cx="1188" cy="759" r="5" fill="#bcbcbc"/><path d="M1184.5 762.5 L1191.5 755.5" stroke="#535353" stroke-width="1.3"/>
 <path d="M1194 764h3l-1.5 1.8z" fill="#c0c0c0"/>
 <path d="M1209 754.5 H1213.5 L1215 756 H1222 V764 H1209Z" fill="#c0c0c0"/>
 <path d="M1236 755 H1246 V764 H1238.5 V760 H1236Z" fill="#c0c0c0"/><path d="M1236 759 L1239 755" stroke="#535353" stroke-width="1"/>
 <path d="M1263 756 H1274 M1266.5 756 V754.5 H1270.5 V756 M1264.5 757 V764.5 H1272.5 V757" fill="none" stroke="#c0c0c0" stroke-width="1.1"/>
 <path d="M1266.8 758.5 V763 M1268.5 758.5 V763 M1270.2 758.5 V763" stroke="#c0c0c0" stroke-width="0.8"/>
</svg>
<div class="a" style="left:1041px;top:767px;width:262px;height:1px;background:#2a2a2a"></div>

<!-- TOOLS PANEL -->
<div class="a" style="left:18px;top:103px;width:39px;height:665px;background:#2a2a2a;border-radius:5px 5px 0 0"></div>
<div class="a" style="left:19px;top:104px;width:37px;height:13px;background:#3b3b3b;border-radius:4px 4px 0 0;box-shadow:inset 0 1px 0 #474747"></div>
<div class="a" style="left:19px;top:116px;width:37px;height:651px;background:#535353;box-shadow:inset 0 1px 0 #6a6a6a"></div>
<svg style="left:19px;top:104px" width="37" height="664" viewBox="19 104 37 664">
 <defs>
  <linearGradient id="ig" x1="0" y1="0" x2="0" y2="1"><stop offset="0" stop-color="#d4d4d4"/><stop offset="1" stop-color="#a8a8a8"/></linearGradient>
 </defs>
 <path d="M28 107.3 L31.6 110.2 L28 113.1Z M31.8 107.3 L35.4 110.2 L31.8 113.1Z" fill="#c8c8c8" stroke="#222" stroke-width="0.4"/>
 <path d="M45.3 107.6 L51 113 M51 107.6 L45.3 113" stroke="#222" stroke-width="2.8"/>
 <path d="M45.3 107.6 L51 113 M51 107.6 L45.3 113" stroke="#d4d4d4" stroke-width="1.6"/>
 <g fill="#262626"><rect x="28" y="121" width="1" height="3"/><rect x="30" y="121" width="1" height="3"/><rect x="32" y="121" width="1" height="3"/><rect x="34" y="121" width="1" height="3"/><rect x="36" y="121" width="1" height="3"/><rect x="38" y="121" width="1" height="3"/><rect x="40" y="121" width="1" height="3"/><rect x="42" y="121" width="1" height="3"/><rect x="44" y="121" width="1" height="3"/><rect x="46" y="121" width="1" height="3"/></g>
 <g fill="#6e6e6e"><rect x="28" y="124" width="1" height="1"/><rect x="30" y="124" width="1" height="1"/><rect x="32" y="124" width="1" height="1"/><rect x="34" y="124" width="1" height="1"/><rect x="36" y="124" width="1" height="1"/><rect x="38" y="124" width="1" height="1"/><rect x="40" y="124" width="1" height="1"/><rect x="42" y="124" width="1" height="1"/><rect x="44" y="124" width="1" height="1"/><rect x="46" y="124" width="1" height="1"/></g>
 <!-- separators -->
 <rect x="23" y="289" width="29" height="1" fill="#3a3a3a"/>
 <rect x="23" y="500" width="29" height="1" fill="#3a3a3a"/>
 <rect x="23" y="607" width="29" height="1" fill="#3a3a3a"/>
 <!-- submenu triangles -->
 <g fill="#e4e4e4">
  <path d="M49 178v3h-3z"/><path d="M49 204v3h-3z"/><path d="M49 230v3h-3z"/><path d="M49 256v3h-3z"/><path d="M49 282v3h-3z"/>
  <path d="M49 311v3h-3z"/><path d="M49 337v3h-3z"/><path d="M49 363v3h-3z"/><path d="M49 389v3h-3z"/><path d="M49 415v3h-3z"/><path d="M49 441v3h-3z"/><path d="M49 467v3h-3z"/><path d="M49 493v3h-3z"/>
  <path d="M49 522v3h-3z"/><path d="M49 548v3h-3z"/><path d="M49 574v3h-3z"/><path d="M49 600v3h-3z"/>
  <path d="M49 629v3h-3z"/>
  <path d="M49 758v3h-3z"/>
 </g>
 <!-- move -->
 <path d="M29 137.5 L36.2 144.5 L32 144.8 L29 148.2Z" fill="#bdbdbd" stroke="#2a2a2a" stroke-width="0.7"/>
 <path d="M41.6 141.5V151 M37 146.3H46.2" stroke="#2a2a2a" stroke-width="2.6"/>
 <path d="M41.6 141.5V151 M37 146.3H46.2" stroke="#d8d8d8" stroke-width="1"/>
 <path d="M40 143.2L41.6 141.4L43.2 143.2 M40 149.4L41.6 151.2L43.2 149.4 M38.9 144.7L37.1 146.3L38.9 147.9 M44.3 144.7L46.1 146.3L44.3 147.9" fill="none" stroke="#d8d8d8" stroke-width="1"/>
 <!-- marquee -->
 <rect x="30.5" y="164.2" width="13" height="12.2" fill="none" stroke="#262626" stroke-width="2.2" stroke-dasharray="3 2"/>
 <rect x="30.5" y="164.2" width="13" height="12.2" fill="none" stroke="#dcdcdc" stroke-width="1.2" stroke-dasharray="3 2"/>
 <!-- lasso -->
 <ellipse cx="37" cy="194.5" rx="7.6" ry="4.6" transform="rotate(-14 37 194.5)" fill="none" stroke="#2a2a2a" stroke-width="2.4"/>
 <ellipse cx="37" cy="194.5" rx="7.6" ry="4.6" transform="rotate(-14 37 194.5)" fill="none" stroke="#d0d0d0" stroke-width="1.2"/>
 <path d="M30.5 198.5 C29 200 31 201 32.5 200.2 C34 201.5 33.5 203 32.2 204.5" fill="none" stroke="#d0d0d0" stroke-width="1.2"/>
 <!-- quick selection -->
 <circle cx="33.4" cy="223" r="4.8" fill="none" stroke="#e8e8e8" stroke-width="1.3" stroke-dasharray="1 1.3"/>
 <path d="M47.3 216.8 L39.8 224" stroke="#2a2a2a" stroke-width="3.8" stroke-linecap="round"/>
 <path d="M47.2 217 L40 223.8" stroke="#bdbdbd" stroke-width="2.6" stroke-linecap="round"/>
 <path d="M31 227.8 C33.5 224 37 222.5 40.5 224 C41 227.5 36 229.5 31 227.8Z" fill="#c8c8c8" stroke="#2a2a2a" stroke-width="0.6"/>
 <!-- crop -->
 <path d="M33 241V252.5H44 M29.5 245H39.8V255.5" fill="none" stroke="#262626" stroke-width="3"/>
 <path d="M33 241V252.5H44 M29.5 245H39.8V255.5" fill="none" stroke="#c8c8c8" stroke-width="2"/>
 <path d="M34.5 250.5L44 241" stroke="#cfcfcf" stroke-width="0.9"/>
 <!-- eyedropper -->
 <path d="M30.3 281.8 L31.2 278.5 L38 271.5 L40.5 274 L33.5 281Z" fill="#6a6a6a" stroke="#e0e0e0" stroke-width="1"/>
 <path d="M36.5 270.5 L43.3 277.3" stroke="#2a2a2a" stroke-width="3.6"/>
 <path d="M36.8 270.8 L43 277" stroke="#c0c0c0" stroke-width="2.6"/>
 <path d="M39.5 272 C39.5 268.5 42 266.2 44.5 267.5 C46.5 269 45 272.5 42 274.5Z" fill="#c4c4c4" stroke="#2a2a2a" stroke-width="0.6"/>
 <!-- healing -->
 <g transform="rotate(-45 37 303.5)"><rect x="27.5" y="299.2" width="19.5" height="8.6" rx="4.3" fill="#9a9a9a" stroke="#d0d0d0" stroke-width="1"/><rect x="33.5" y="299.5" width="7.5" height="8" fill="#b8b8b8"/><g fill="#3a3a3a"><circle cx="35.3" cy="301.8" r="0.7"/><circle cx="39.2" cy="301.8" r="0.7"/><circle cx="35.3" cy="305.2" r="0.7"/><circle cx="39.2" cy="305.2" r="0.7"/><circle cx="37.25" cy="303.5" r="0.7"/></g></g>
 <!-- brush -->
 <path d="M45.6 321.5 L37.5 331" stroke="#2a2a2a" stroke-width="3.6" stroke-linecap="round"/>
 <path d="M45.5 321.7 L37.8 330.7" stroke="#bdbdbd" stroke-width="2.4" stroke-linecap="round"/>
 <path d="M28 336 C31 333.5 34 331 37.8 331.5 C39 334.8 35.5 337.8 28 336Z" fill="#c8c8c8" stroke="#2a2a2a" stroke-width="0.6"/>
 <!-- stamp -->
 <circle cx="36.4" cy="350.3" r="3" fill="#bdbdbd" stroke="#2a2a2a" stroke-width="0.5"/>
 <rect x="35" y="352" width="2.8" height="6" fill="#bdbdbd"/>
 <rect x="28.9" y="357.6" width="15" height="4.4" fill="url(#ig)" stroke="#2a2a2a" stroke-width="0.5"/>
 <rect x="30" y="362.9" width="13" height="1.4" fill="#c4c4c4"/>
 <!-- history brush -->
 <path d="M34 377 C36.5 375.8 39.5 375.6 41.5 376.2" fill="none" stroke="#c4c4c4" stroke-width="1.5"/>
 <path d="M35 374.3 L29.3 378.5 L35.2 379.3Z" fill="#c4c4c4"/>
 <path d="M45 375.5 L37.5 384" stroke="#2a2a2a" stroke-width="3.2" stroke-linecap="round"/>
 <path d="M45 375.6 L37.7 383.8" stroke="#bdbdbd" stroke-width="2.2" stroke-linecap="round"/>
 <path d="M29 388.2 C32 385.8 35 383.5 38.2 384 C39.2 387 36 389.5 29 388.2Z" fill="#c8c8c8" stroke="#2a2a2a" stroke-width="0.5"/>
 <path d="M43.6 380 C43.3 383 42.5 385.5 40.5 387.8" fill="none" stroke="#d8d8d8" stroke-width="1" stroke-dasharray="1 1.3"/>
 <!-- eraser -->
 <path d="M32 399.5 L33.2 402.6 L36.4 401 L35.4 404.2 L38 405.2 L35.4 406.4 L36.4 409.5 L33.2 408 L32 411 L30.8 408 L27.6 409.5 L28.6 406.4 L26 405.2 L28.6 404.2 L27.6 401 L30.8 402.6Z" fill="#d8d8d8" stroke="#2a2a2a" stroke-width="0.4"/>
 <path d="M34.8 408.2 L39 404.2 H46.8 L46.8 407.5 L42.6 414 H34.3Z" fill="#bcbcbc" stroke="#2a2a2a" stroke-width="0.6"/>
 <path d="M34.8 408.2 H42.8 L46.8 404.2 M42.8 408.2 V414" fill="none" stroke="#888" stroke-width="0.7"/>
 <!-- bucket -->
 <path d="M35 430.5 C34.5 426.5 35.8 424.8 37.5 425 C39.5 425.3 39.8 428 39 431" fill="none" stroke="#d0d0d0" stroke-width="1.3"/>
 <path d="M30 434 L38.5 430 L43 437 L36.5 442.5 C34 443.5 30.5 442 29.5 439Z" fill="url(#ig)" stroke="#2a2a2a" stroke-width="0.6"/>
 <path d="M41.5 435 C43.5 436 44.2 438.5 43.8 440.5 C43.5 441.8 42 441.8 41.8 440.5 C41.6 439 42.5 438 41.5 436.5" fill="#c8c8c8"/>
 <!-- blur -->
 <path d="M31.5 452.5 C31.5 451.2 32.5 450.8 34 450.8 L43 450.8 C44 450.8 44.5 451.5 44.5 452.5 L44.5 459.5 C44.5 462 43 463.2 40.5 463.2 L38.5 463.2 L32.5 468 L30 467 L34.5 461 C32.5 459 31.5 456.5 31.5 452.5Z" fill="#c4c4c4" stroke="#2a2a2a" stroke-width="0.6"/>
 <path d="M36.5 455.5 L31.5 463.2 M40.5 457 L36 462.5" stroke="#555" stroke-width="0.8"/>
 <!-- dodge -->
 <circle cx="34.7" cy="483.6" r="4.9" fill="#bcbcbc" stroke="#2a2a2a" stroke-width="0.6"/>
 <path d="M38.3 487.3 L43.3 492.3" stroke="#bcbcbc" stroke-width="1.8" stroke-linecap="round"/>
 <!-- pen -->
 <path d="M29.2 522.2 L31.5 515 L36.8 510 L41.8 514.8 L36.6 520Z" fill="#c0c0c0" stroke="#2a2a2a" stroke-width="0.6"/>
 <path d="M38.6 508.5 L41.5 505.8 L46.1 510.5 L43.3 513.2Z" fill="#c0c0c0" stroke="#2a2a2a" stroke-width="0.6"/>
 <circle cx="36" cy="515.6" r="1" fill="#2a2a2a"/>
 <path d="M29.6 521.8 L35.5 516.1" stroke="#3a3a3a" stroke-width="0.6"/>
 <!-- type -->
 <text x="37" y="546.8" font-family="Liberation Serif" font-size="18.6" fill="url(#ig)" text-anchor="middle">T</text>
 <!-- path select -->
 <path d="M33.1 558.5 L41.9 567.6 L38.3 567.9 L40.6 573.2 L38.6 574.2 L36.4 569 L33.1 571.9Z" fill="#bcbcbc" stroke="#2a2a2a" stroke-width="0.6"/>
 <!-- ellipse -->
 <ellipse cx="36.85" cy="592.9" rx="7.6" ry="5.7" fill="#717171" stroke="#c8c8c8" stroke-width="1.1"/>
 <!-- hand -->
 <path d="M29 620 C29.5 619 30.8 619.2 31.5 620.2 L33.2 622 L33 615.5 C33 614 35 614 35 615.5 L35.4 619.5 L35.8 614.2 C35.8 612.8 37.8 612.8 37.8 614.2 L38 619.5 L38.8 615 C39 613.8 40.8 613.8 40.7 615 L40.4 620.3 L42 617.3 C42.5 616.3 44 616.6 43.8 617.8 L42.5 623.8 C42 626.5 41.3 628.5 40.3 629.7 L33.6 629.7 C32.5 627.5 29.5 623 29 620Z" fill="url(#ig)" stroke="#2a2a2a" stroke-width="0.6"/>
 <!-- zoom (active) -->
 <rect x="22.5" y="636.5" width="30" height="23" rx="2" fill="#3a3a3a" stroke="#363636" stroke-width="1"/>
 <circle cx="35.5" cy="645.2" r="4.8" fill="#767676" stroke="#c4c4c4" stroke-width="1.2"/>
 <path d="M39 648.8 L44.6 654.4" stroke="#bdbdbd" stroke-width="2.2" stroke-linecap="round"/>
 <!-- default colors -->
 <rect x="25.5" y="667.5" width="6.5" height="6.5" fill="#bdbdbd" stroke="#3a3a3a" stroke-width="0.8"/>
 <rect x="22.5" y="663.5" width="6.5" height="6.5" fill="#2e2e2e" stroke="#d0d0d0" stroke-width="1"/>
 <path d="M42 664.8 C45.5 664.8 48 666.5 48 670.5" fill="none" stroke="#d8d8d8" stroke-width="1"/>
 <path d="M39.9 664.8 L42.6 662.4 L42.6 667.2Z M48 672.7 L45.6 669.9 L50.4 669.9Z" fill="#d8d8d8"/>
 <!-- fg/bg -->
 <rect x="32.5" y="689.5" width="19" height="19" fill="#ffffff" stroke="#2a2a2a" stroke-width="1"/>
 <rect x="22.5" y="679.5" width="19" height="19" fill="#ffffff" stroke="#2a2a2a" stroke-width="1"/>
 <!-- quick mask -->
 <rect x="28.5" y="717.5" width="16" height="12" fill="#393939" stroke="#c4c4c4" stroke-width="1"/>
 <circle cx="36.5" cy="723.5" r="3.7" fill="none" stroke="#e0e0e0" stroke-width="1" stroke-dasharray="1 1.1"/>
 <!-- screen mode -->
 <rect x="28.5" y="746.5" width="11" height="10" fill="#6a6a6a" stroke="#c4c4c4" stroke-width="1"/>
 <rect x="33.5" y="743.5" width="11.5" height="10" fill="#7a7a7a" stroke="#c4c4c4" stroke-width="1"/>
</svg>


</body></html>
